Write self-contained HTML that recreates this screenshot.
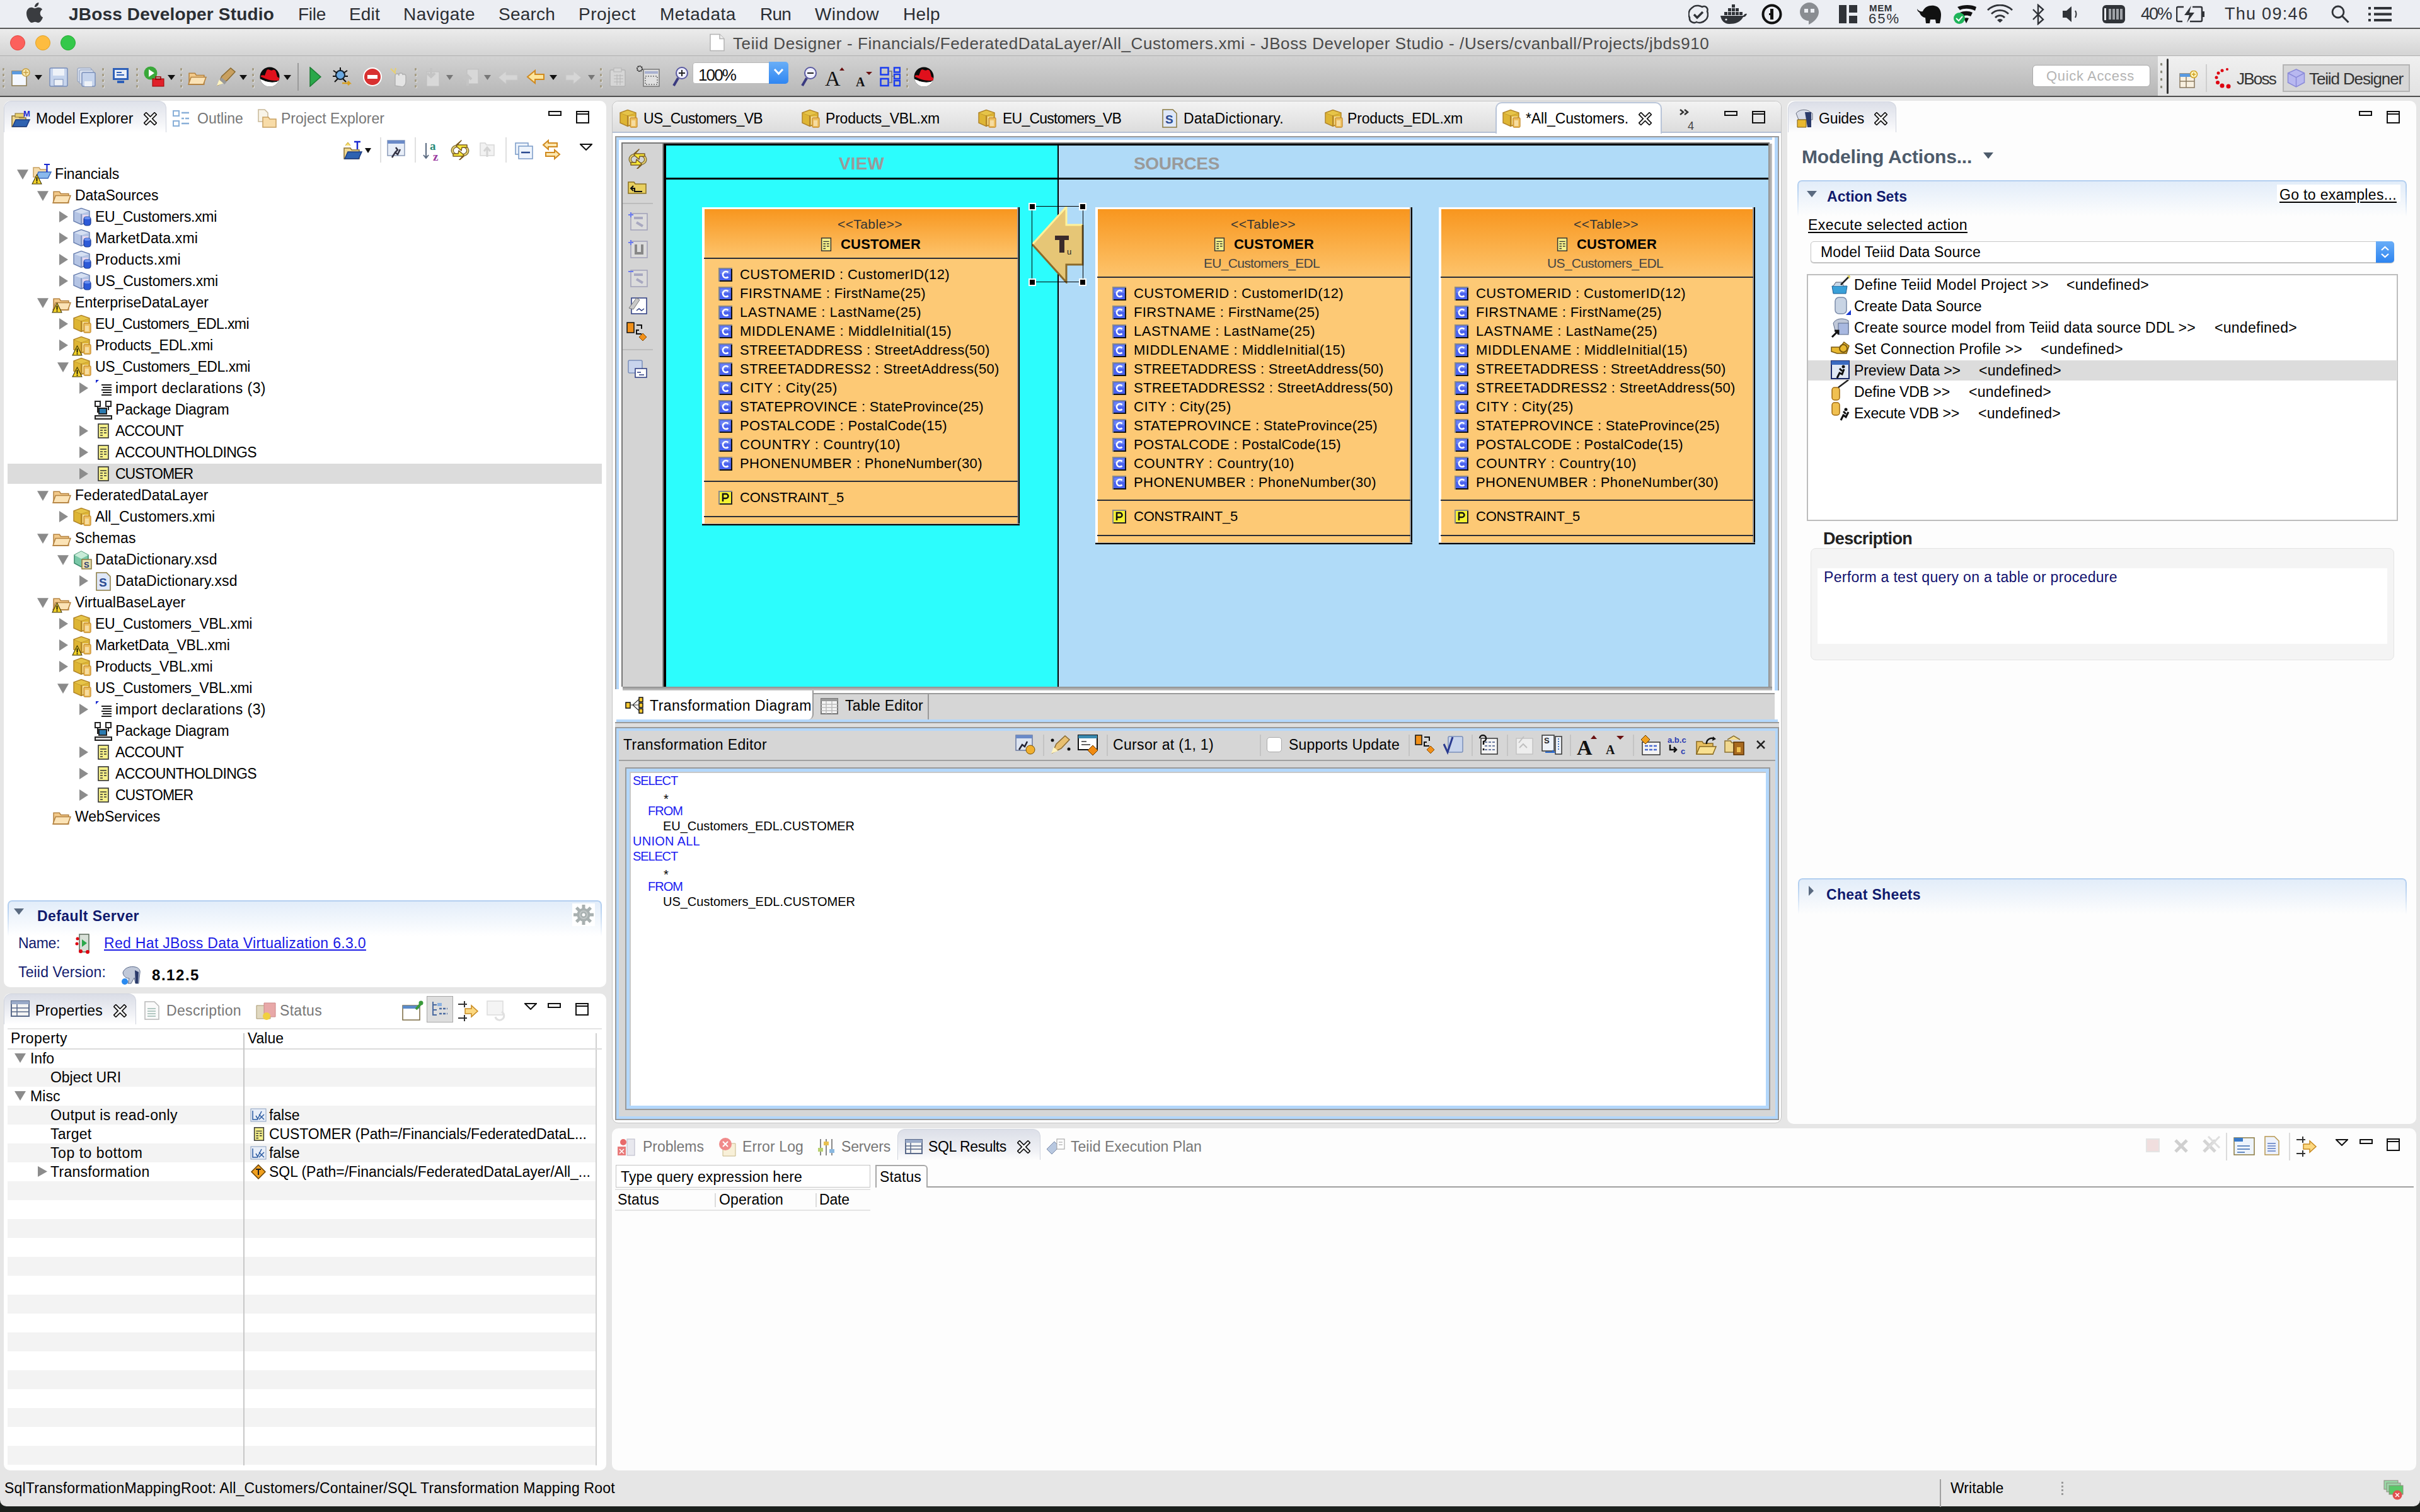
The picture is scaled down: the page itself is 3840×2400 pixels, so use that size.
<!DOCTYPE html><html><head><meta charset="utf-8"><style>
*{margin:0;padding:0;box-sizing:border-box}
html,body{width:3840px;height:2400px;overflow:hidden;background:#1b201d;font-family:"Liberation Sans",sans-serif}
div,svg{position:absolute}
.t{white-space:nowrap}
</style></head><body>
<div style="left:0px;top:0px;width:3840px;height:44px;background:#eceef3"></div>
<div style="left:0px;top:44px;width:3840px;height:2347px;background:#e6e6e6;border-radius:0 0 10px 10px"></div>
<div style="left:0px;top:44px;width:3840px;height:2px;background:#5a5a5a"></div>
<div style="left:0px;top:46px;width:3840px;height:43px;background:linear-gradient(#ececec,#d3d3d3)"></div>
<div style="left:0px;top:88px;width:3840px;height:1px;background:#b0b0b0"></div>
<div style="left:0px;top:89px;width:3840px;height:63px;background:linear-gradient(#d2d2d2,#b7b7b7)"></div>
<div style="left:0px;top:152px;width:3840px;height:2px;background:#4f4f4f"></div>
<div style="left:6px;top:160px;width:956px;height:1407px;background:#fff;border-radius:10px"></div>
<div style="left:6px;top:1577px;width:956px;height:757px;background:#fff;border-radius:10px"></div>
<div style="left:971px;top:160px;width:1856px;height:1623px;background:#fff;border:1px solid #c4c4c4;border-radius:10px"></div>
<div style="left:2836px;top:160px;width:998px;height:1624px;background:#fdfdfd;border-radius:10px"></div>
<div style="left:971px;top:1791px;width:2863px;height:543px;background:#fdfdfd;border-radius:10px"></div>
<svg style="left:42px;top:4px" width="26" height="32" viewBox="0 0 814 1000"><path fill="#3a3c40" d="M788.1 340.9c-5.8 4.5-108.2 62.2-108.2 190.5 0 148.4 130.3 200.9 134.2 202.2-.6 3.2-20.7 71.9-68.7 141.9-42.8 61.6-87.5 123.1-155.5 123.1s-85.5-39.5-164-39.5c-76.5 0-103.7 40.8-165.9 40.8s-105.6-57-155.5-127C46.7 790.7 0 663 0 541.8c0-194.4 126.4-297.5 250.8-297.5 66.1 0 121.2 43.4 162.7 43.4 39.5 0 101.1-46 176.3-46 28.5 0 130.9 2.6 198.3 99.2zm-234-181.5c31.1-36.9 53.1-88.1 53.1-139.3 0-7.1-.6-14.3-1.9-20.1-50.6 1.9-110.8 33.7-147.1 75.8-28.5 32.4-55.1 83.6-55.1 135.5 0 7.8 1.3 15.6 1.9 18.1 3.2.6 8.4 1.3 13.6 1.3 45.4 0 102.5-30.4 135.5-71.3z"/></svg>
<div class="t" style="left:109px;top:8.5px;font-size:28px;line-height:28px;color:#2b2e33;font-weight:bold;letter-spacing:0.175px;">JBoss Developer Studio</div>
<div class="t" style="left:473px;top:8.5px;font-size:28px;line-height:28px;color:#2b2e33;letter-spacing:-0.281px;">File</div>
<div class="t" style="left:554px;top:8.5px;font-size:28px;line-height:28px;color:#2b2e33;letter-spacing:0.188px;">Edit</div>
<div class="t" style="left:640px;top:8.5px;font-size:28px;line-height:28px;color:#2b2e33;letter-spacing:0.434px;">Navigate</div>
<div class="t" style="left:791px;top:8.5px;font-size:28px;line-height:28px;color:#2b2e33;letter-spacing:0.211px;">Search</div>
<div class="t" style="left:918px;top:8.5px;font-size:28px;line-height:28px;color:#2b2e33;letter-spacing:0.549px;">Project</div>
<div class="t" style="left:1047px;top:8.5px;font-size:28px;line-height:28px;color:#2b2e33;letter-spacing:0.527px;">Metadata</div>
<div class="t" style="left:1206px;top:8.5px;font-size:28px;line-height:28px;color:#2b2e33;letter-spacing:-0.792px;">Run</div>
<div class="t" style="left:1293px;top:8.5px;font-size:28px;line-height:28px;color:#2b2e33;letter-spacing:0.401px;">Window</div>
<div class="t" style="left:1433px;top:8.5px;font-size:28px;line-height:28px;color:#2b2e33;letter-spacing:0.352px;">Help</div>
<svg style="left:2679px;top:7px" width="32" height="31" viewBox="0 0 32 31"><path d="M9 3c4-2 10-1 13 1 5-3 10 2 8 7 2 5 1 11-3 14-4 4-10 5-14 3-5 3-12-1-11-7-3-5-1-12 3-15z" fill="none" stroke="#303338" stroke-width="2.5"/><path d="M9 16l5 5 9-9" fill="none" stroke="#303338" stroke-width="3.5"/></svg>
<svg style="left:2729px;top:6px" width="44" height="32" viewBox="0 0 44 32"><rect x="19" y="1" width="5" height="5" fill="#303338"/><rect x="13" y="7" width="5" height="5" fill="#303338"/><rect x="19" y="7" width="5" height="5" fill="#303338"/><rect x="25" y="7" width="5" height="5" fill="#303338"/><rect x="7" y="13" width="5" height="5" fill="#303338"/><rect x="13" y="13" width="5" height="5" fill="#303338"/><rect x="19" y="13" width="5" height="5" fill="#303338"/><rect x="25" y="13" width="5" height="5" fill="#303338"/><rect x="31" y="13" width="5" height="5" fill="#303338"/><path d="M1 19h36c2-3 4-4 6-3-1 3-3 5-6 5-4 8-12 11-22 11C7 32 2 26 1 19z" fill="#303338"/><circle cx="10" cy="25" r="1.6" fill="#eceef3"/></svg>
<svg style="left:2795px;top:6px" width="33" height="33" viewBox="0 0 33 33"><circle cx="16.5" cy="16.5" r="14" fill="none" stroke="#111" stroke-width="4"/><rect x="14" y="8" width="5" height="17" fill="#111"/><rect x="12" y="15" width="3" height="3" fill="#111"/></svg>
<svg style="left:2855px;top:3px" width="32" height="37" viewBox="0 0 32 37"><path d="M16 1C8 1 1 8 1 16c0 7 6 14 14 14v6c9-4 16-12 16-20C31 8 24 1 16 1z" fill="#8a8d92"/><rect x="8" y="11" width="6" height="6" fill="#eceef3"/><rect x="18" y="11" width="6" height="6" fill="#eceef3"/></svg>
<svg style="left:2918px;top:8px" width="29" height="29" viewBox="0 0 29 29"><rect x="0" y="0" width="12" height="29" fill="#303338"/><rect x="16" y="0" width="13" height="12" fill="#303338"/><rect x="16" y="17" width="13" height="12" fill="#303338"/></svg>
<div class="t" style="left:2966px;top:4.8px;font-size:15px;line-height:15px;color:#303338;font-weight:bold;letter-spacing:0.667px;">MEM</div>
<div class="t" style="left:2965px;top:19.4px;font-size:22px;line-height:22px;color:#303338;letter-spacing:1.990px;">65%</div>
<svg style="left:3041px;top:7px" width="40" height="31" viewBox="0 0 40 31"><path d="M1 7c3 4 6 5 9 4 3-7 10-10 18-9 8 1 11 8 11 14 0 5-1 9-2 14h-6l-1-6h-8l-1 6h-6l-1-9c-4 0-8-4-9-8C3 12 1 10 1 7z" fill="#111"/></svg>
<svg style="left:3098px;top:7px" width="40" height="32" viewBox="0 0 40 32"><path d="M8 4c10-4 22-4 30 0l-2 6C28 6 18 6 12 9z M12 13c6-3 14-3 20 0l-3 6c-4-2-9-2-13 0z M18 22c3-1 6-1 8 0l-4 8z" fill="#111"/><circle cx="11" cy="22" r="9" fill="#1eb45a"/><path d="M6 22l4 4 6-7" stroke="#fff" stroke-width="2" fill="none"/></svg>
<svg style="left:3152px;top:7px" width="43" height="30" viewBox="0 0 43 30"><path d="M2 9a28 28 0 0 1 39 0" stroke="#303338" stroke-width="2.8" fill="none"/><path d="M8 15a19 19 0 0 1 27 0" stroke="#303338" stroke-width="2.8" fill="none"/><path d="M14 21a10 10 0 0 1 15 0" stroke="#303338" stroke-width="2.8" fill="none"/><path d="M17 25l4.500 4 4.500-4a6 6 0 0 0-9 0z" fill="#303338"/></svg>
<svg style="left:3224px;top:6px" width="20" height="34" viewBox="0 0 20 34"><path d="M2 9l16 16-8 7V2l8 7L2 25" stroke="#303338" stroke-width="2.4" fill="none"/></svg>
<svg style="left:3273px;top:10px" width="27" height="25" viewBox="0 0 27 25"><path d="M0 7h6l8-7v25l-8-7H0z" fill="#303338"/><path d="M20 7q3 5 0 11" stroke="#303338" stroke-width="2" fill="none"/></svg>
<svg style="left:3336px;top:8px" width="36" height="29" viewBox="0 0 36 29"><rect x="0" y="0" width="36" height="29" rx="6" fill="#303338"/><rect x="3" y="5" width="3" height="19" fill="#eceef3"/><rect x="10" y="6" width="4" height="17" fill="#a0a3a8"/><rect x="16" y="6" width="4" height="17" fill="#a0a3a8"/><rect x="22" y="6" width="4" height="17" fill="#a0a3a8"/><rect x="28" y="6" width="4" height="17" fill="#a0a3a8"/></svg>
<div class="t" style="left:3397px;top:9.0px;font-size:27px;line-height:27px;color:#303338;letter-spacing:-2.010px;">40%</div>
<svg style="left:3453px;top:9px" width="46" height="27" viewBox="0 0 46 27"><path d="M12 2H3a2 2 0 0 0-2 2v19a2 2 0 0 0 2 2h7 M26 2h13a2 2 0 0 1 2 2v19a2 2 0 0 1-2 2H22" stroke="#303338" stroke-width="2.5" fill="none"/><rect x="42" y="9" width="3" height="9" fill="#303338"/><path d="M24 0L13 15h8l-4 12 12-16h-8z" fill="#303338"/></svg>
<div class="t" style="left:3530px;top:9.0px;font-size:27px;line-height:27px;color:#303338;letter-spacing:1.267px;">Thu 09:46</div>
<svg style="left:3699px;top:8px" width="30" height="30" viewBox="0 0 30 30"><circle cx="11" cy="11" r="9" stroke="#303338" stroke-width="2.8" fill="none"/><path d="M17.500 17.500l10 10" stroke="#303338" stroke-width="3" /></svg>
<svg style="left:3758px;top:11px" width="37" height="23" viewBox="0 0 37 23"><rect x="0" y="0" width="4" height="4" fill="#303338"/><rect x="0" y="9.500" width="4" height="4" fill="#303338"/><rect x="0" y="19" width="4" height="4" fill="#303338"/><rect x="9" y="0" width="28" height="4" fill="#303338"/><rect x="9" y="9.500" width="28" height="4" fill="#303338"/><rect x="9" y="19" width="28" height="4" fill="#303338"/></svg>
<div style="left:16px;top:56px;width:24px;height:24px;background:#fc605c;border:1px solid #e2463f;border-radius:50%"></div>
<div style="left:56px;top:56px;width:24px;height:24px;background:#fdbc40;border:1px solid #e1a127;border-radius:50%"></div>
<div style="left:96px;top:56px;width:24px;height:24px;background:#34c84a;border:1px solid #27aa35;border-radius:50%"></div>
<svg style="left:1126px;top:53px" width="24" height="29" viewBox="0 0 24 28"><path d="M1 1h15l7 7v19H1z" fill="#fff" stroke="#b4b4b4" stroke-width="1.5"/><path d="M16 1v7h7" fill="#eee" stroke="#b4b4b4" stroke-width="1.5"/></svg>
<div class="t" style="left:1163px;top:55.5px;font-size:26px;line-height:26px;color:#4a4a4a;letter-spacing:0.596px;">Teiid Designer - Financials/FederatedDataLayer/All_Customers.xmi - JBoss Developer Studio - /Users/cvanball/Projects/jbds910</div>
<div style="left:4px;top:108px;width:3px;height:4px;background:#a49c84;border-radius:1px;box-shadow:1px 1px 0 #e0e0e0"></div>
<div style="left:4px;top:117px;width:3px;height:4px;background:#a49c84;border-radius:1px;box-shadow:1px 1px 0 #e0e0e0"></div>
<div style="left:4px;top:126px;width:3px;height:4px;background:#a49c84;border-radius:1px;box-shadow:1px 1px 0 #e0e0e0"></div>
<div style="left:4px;top:135px;width:3px;height:4px;background:#a49c84;border-radius:1px;box-shadow:1px 1px 0 #e0e0e0"></div>
<div style="left:162px;top:108px;width:3px;height:4px;background:#a49c84;border-radius:1px;box-shadow:1px 1px 0 #e0e0e0"></div>
<div style="left:162px;top:117px;width:3px;height:4px;background:#a49c84;border-radius:1px;box-shadow:1px 1px 0 #e0e0e0"></div>
<div style="left:162px;top:126px;width:3px;height:4px;background:#a49c84;border-radius:1px;box-shadow:1px 1px 0 #e0e0e0"></div>
<div style="left:162px;top:135px;width:3px;height:4px;background:#a49c84;border-radius:1px;box-shadow:1px 1px 0 #e0e0e0"></div>
<div style="left:216px;top:108px;width:3px;height:4px;background:#a49c84;border-radius:1px;box-shadow:1px 1px 0 #e0e0e0"></div>
<div style="left:216px;top:117px;width:3px;height:4px;background:#a49c84;border-radius:1px;box-shadow:1px 1px 0 #e0e0e0"></div>
<div style="left:216px;top:126px;width:3px;height:4px;background:#a49c84;border-radius:1px;box-shadow:1px 1px 0 #e0e0e0"></div>
<div style="left:216px;top:135px;width:3px;height:4px;background:#a49c84;border-radius:1px;box-shadow:1px 1px 0 #e0e0e0"></div>
<div style="left:286px;top:108px;width:3px;height:4px;background:#a49c84;border-radius:1px;box-shadow:1px 1px 0 #e0e0e0"></div>
<div style="left:286px;top:117px;width:3px;height:4px;background:#a49c84;border-radius:1px;box-shadow:1px 1px 0 #e0e0e0"></div>
<div style="left:286px;top:126px;width:3px;height:4px;background:#a49c84;border-radius:1px;box-shadow:1px 1px 0 #e0e0e0"></div>
<div style="left:286px;top:135px;width:3px;height:4px;background:#a49c84;border-radius:1px;box-shadow:1px 1px 0 #e0e0e0"></div>
<div style="left:400px;top:108px;width:3px;height:4px;background:#a49c84;border-radius:1px;box-shadow:1px 1px 0 #e0e0e0"></div>
<div style="left:400px;top:117px;width:3px;height:4px;background:#a49c84;border-radius:1px;box-shadow:1px 1px 0 #e0e0e0"></div>
<div style="left:400px;top:126px;width:3px;height:4px;background:#a49c84;border-radius:1px;box-shadow:1px 1px 0 #e0e0e0"></div>
<div style="left:400px;top:135px;width:3px;height:4px;background:#a49c84;border-radius:1px;box-shadow:1px 1px 0 #e0e0e0"></div>
<div style="left:658px;top:108px;width:3px;height:4px;background:#a49c84;border-radius:1px;box-shadow:1px 1px 0 #e0e0e0"></div>
<div style="left:658px;top:117px;width:3px;height:4px;background:#a49c84;border-radius:1px;box-shadow:1px 1px 0 #e0e0e0"></div>
<div style="left:658px;top:126px;width:3px;height:4px;background:#a49c84;border-radius:1px;box-shadow:1px 1px 0 #e0e0e0"></div>
<div style="left:658px;top:135px;width:3px;height:4px;background:#a49c84;border-radius:1px;box-shadow:1px 1px 0 #e0e0e0"></div>
<div style="left:952px;top:108px;width:3px;height:4px;background:#a49c84;border-radius:1px;box-shadow:1px 1px 0 #e0e0e0"></div>
<div style="left:952px;top:117px;width:3px;height:4px;background:#a49c84;border-radius:1px;box-shadow:1px 1px 0 #e0e0e0"></div>
<div style="left:952px;top:126px;width:3px;height:4px;background:#a49c84;border-radius:1px;box-shadow:1px 1px 0 #e0e0e0"></div>
<div style="left:952px;top:135px;width:3px;height:4px;background:#a49c84;border-radius:1px;box-shadow:1px 1px 0 #e0e0e0"></div>
<div style="left:1438px;top:108px;width:3px;height:4px;background:#a49c84;border-radius:1px;box-shadow:1px 1px 0 #e0e0e0"></div>
<div style="left:1438px;top:117px;width:3px;height:4px;background:#a49c84;border-radius:1px;box-shadow:1px 1px 0 #e0e0e0"></div>
<div style="left:1438px;top:126px;width:3px;height:4px;background:#a49c84;border-radius:1px;box-shadow:1px 1px 0 #e0e0e0"></div>
<div style="left:1438px;top:135px;width:3px;height:4px;background:#a49c84;border-radius:1px;box-shadow:1px 1px 0 #e0e0e0"></div>
<div style="left:3428px;top:108px;width:3px;height:4px;background:#a49c84;border-radius:1px;box-shadow:1px 1px 0 #e0e0e0"></div>
<div style="left:3428px;top:117px;width:3px;height:4px;background:#a49c84;border-radius:1px;box-shadow:1px 1px 0 #e0e0e0"></div>
<div style="left:3428px;top:126px;width:3px;height:4px;background:#a49c84;border-radius:1px;box-shadow:1px 1px 0 #e0e0e0"></div>
<div style="left:3428px;top:135px;width:3px;height:4px;background:#a49c84;border-radius:1px;box-shadow:1px 1px 0 #e0e0e0"></div>
<div style="left:472px;top:100px;width:2px;height:44px;background:#9a9a9a"></div>
<svg style="left:18px;top:107px" width="30" height="31" viewBox="0 0 30 31"><rect x="1" y="6" width="23" height="23" fill="#f4f8ff" stroke="#8a7a50" stroke-width="1.5"/><rect x="1" y="6" width="23" height="5" fill="#5a9ae0"/><circle cx="23" cy="8" r="6" fill="#f8e8b0" stroke="#c8a040" stroke-width="1.5"/><path d="M23 4v8M19 8h8" stroke="#c8a040" stroke-width="1.5"/></svg>
<svg style="left:55px;top:119px" width="12" height="8" viewBox="0 0 12 8"><path d="M0 0h12l-6.0 8z" fill="#111"/></svg>
<svg style="left:78px;top:107px" width="30" height="31" viewBox="0 0 30 31"><rect x="1" y="1" width="28" height="29" rx="2" fill="#c6d4ec" stroke="#7a8fba" stroke-width="1.5"/><rect x="6" y="2" width="18" height="11" fill="#eef2f8"/><rect x="8" y="19" width="14" height="10" fill="#eef2f8" stroke="#7a8fba"/></svg>
<svg style="left:122px;top:107px" width="30" height="31" viewBox="0 0 30 31"><rect x="1" y="1" width="22" height="22" rx="2" fill="#d8e0ee" stroke="#8a9aba"/><rect x="4" y="4" width="22" height="22" rx="2" fill="#d8e0ee" stroke="#8a9aba"/><rect x="8" y="8" width="21" height="22" rx="2" fill="#c6d4ec" stroke="#7a8fba" stroke-width="1.5"/><rect x="12" y="22" width="12" height="8" fill="#eef2f8"/></svg>
<svg style="left:178px;top:107px" width="27" height="26" viewBox="0 0 27 26"><rect x="1" y="1" width="25" height="19" fill="#2d5fb8"/><rect x="4" y="4" width="19" height="13" fill="#e8eef8"/><path d="M7 8h8M7 12h12" stroke="#2d5fb8" stroke-width="2"/><rect x="8" y="21" width="11" height="4" fill="#2d5fb8"/></svg>
<svg style="left:228px;top:105px" width="33" height="33" viewBox="0 0 33 33"><circle cx="11" cy="11" r="10.500" fill="#3aa83a"/><path d="M8 5v12l9-6z" fill="#fff"/><rect x="14" y="20" width="18" height="12" fill="#e0202a" stroke="#900" stroke-width="1"/><rect x="19" y="17" width="8" height="4" fill="none" stroke="#900" stroke-width="1.5"/></svg>
<svg style="left:266px;top:119px" width="12" height="8" viewBox="0 0 12 8"><path d="M0 0h12l-6.0 8z" fill="#111"/></svg>
<svg style="left:298px;top:107px" width="31" height="31" viewBox="0 0 30 30"><path d="M2 9h9l2 3h12v14H2z" fill="#f2c98a" stroke="#b58340" stroke-width="1.5"/><path d="M5 15h23l-4 11H1z" fill="#fbe3b6" stroke="#b58340" stroke-width="1.5"/></svg>
<svg style="left:342px;top:107px" width="32" height="30" viewBox="0 0 32 30"><path d="M4 28l6-14 14-13 7 6-13 14z" fill="#c8a060" stroke="#8a6a30" stroke-width="1.5"/><path d="M2 29l4-10 7 6z" fill="#fff4c0"/><path d="M8 18l8 7" stroke="#999" stroke-width="5"/></svg>
<svg style="left:380px;top:119px" width="12" height="8" viewBox="0 0 12 8"><path d="M0 0h12l-6.0 8z" fill="#111"/></svg>
<svg style="left:412px;top:106px" width="32" height="32" viewBox="0 0 32 32"><defs><clipPath id="rhc"><circle cx="16" cy="16" r="15.500"/></clipPath></defs><g clip-path="url(#rhc)"><rect width="32" height="32" fill="#0a0a0a"/><path d="M0 19c6 3 13 5 20 5 5 0 9-1 12-3v11H0z" fill="#fff"/><path d="M2 14c2-1 4-1 6 0l3-8c1-2 3-2 5-1 2 1 4 1 5 0 2-1 4 0 5 3l2 8c2 1 4 2 4 4-1 2-4 2-8 2-7 0-15-3-22-6z" fill="#e0101c"/><path d="M8 22c6 2 13 3 20 1" stroke="#111" stroke-width="1.2" fill="none"/></g></svg>
<svg style="left:450px;top:119px" width="12" height="8" viewBox="0 0 12 8"><path d="M0 0h12l-6.0 8z" fill="#111"/></svg>
<svg style="left:490px;top:106px" width="20" height="32" viewBox="0 0 20 32"><path d="M2 1v30l17-15z" fill="#2aa84a" stroke="#1a7a30" stroke-width="1.5"/></svg>
<svg style="left:527px;top:106px" width="33" height="32" viewBox="0 0 33 32"><circle cx="13" cy="13" r="7" fill="#6aa8e0" stroke="#123" stroke-width="2"/><path d="M2 6l6 4M24 6l-6 4M1 15h5M20 15h5M4 24l5-5M22 24l-5-5M13 1v5" stroke="#111" stroke-width="2"/><path d="M16 26h12l-3-3M28 26l-3 3" stroke="#d8a020" stroke-width="2.500" fill="none"/></svg>
<svg style="left:575px;top:106px" width="32" height="32" viewBox="0 0 32 32"><circle cx="16" cy="16" r="14" fill="#d83030" stroke="#fff" stroke-width="2"/><rect x="8" y="13" width="16" height="6" fill="#fff"/></svg>
<svg style="left:617px;top:106px" width="30" height="32" viewBox="0 0 30 32"><path d="M10 30V14q0-3 3-3t3 3v-2q0-2 3-2t3 2v1q1-2 3-1t2 2v10q0 5-5 8z" fill="#e4e4e4" stroke="#b0b0b0" stroke-width="1.5"/><path d="M3 3l8 8M11 2l-2 8" stroke="#e8d070" stroke-width="2"/></svg>
<svg style="left:672px;top:106px" width="27" height="32" viewBox="0 0 27 32"><rect x="5" y="8" width="20" height="23" fill="#d8d8d8" stroke="#bdbdbd"/><path d="M12 2v14M6 10l6 6 6-6" stroke="#c4c4c4" stroke-width="4" fill="none"/></svg>
<svg style="left:708px;top:119px" width="11" height="8" viewBox="0 0 11 8"><path d="M0 0h11l-5.5 8z" fill="#777"/></svg>
<svg style="left:733px;top:106px" width="27" height="32" viewBox="0 0 27 32"><rect x="8" y="4" width="18" height="23" fill="#d8d8d8" stroke="#bdbdbd"/><path d="M9 30V14M3 20l6-6 6 6" stroke="#c4c4c4" stroke-width="4" fill="none"/></svg>
<svg style="left:768px;top:119px" width="11" height="8" viewBox="0 0 11 8"><path d="M0 0h11l-5.5 8z" fill="#777"/></svg>
<svg style="left:790px;top:112px" width="33" height="22" viewBox="0 0 33 22"><path d="M1 11l12-10v6h18v8H13v6z" fill="#d6d6d6" stroke="#c8c8c8"/></svg>
<svg style="left:835px;top:110px" width="30" height="24" viewBox="0 0 30 24"><path d="M2 12l12-10v6h14v8H14v6z" fill="#fde59a" stroke="#d08a20" stroke-width="2"/></svg>
<svg style="left:872px;top:119px" width="12" height="8" viewBox="0 0 12 8"><path d="M0 0h12l-6.0 8z" fill="#111"/></svg>
<svg style="left:897px;top:112px" width="26" height="22" viewBox="0 0 26 22"><path d="M25 11L13 1v6H1v8h12v6z" fill="#d6d6d6" stroke="#c8c8c8"/></svg>
<svg style="left:933px;top:119px" width="11" height="8" viewBox="0 0 11 8"><path d="M0 0h11l-5.5 8z" fill="#777"/></svg>
<svg style="left:966px;top:106px" width="28" height="32" viewBox="0 0 28 32"><rect x="2" y="5" width="24" height="26" rx="2" fill="#d6d6d6" stroke="#b4b4b4" stroke-width="1.5"/><rect x="8" y="2" width="12" height="6" fill="#d6d6d6" stroke="#b4b4b4"/><path d="M8 14h15M8 19h15M8 24h15M13 12v17M18 12v17" stroke="#b4b4b4"/></svg>
<svg style="left:1010px;top:104px" width="37" height="34" viewBox="0 0 37 34"><circle cx="5" cy="5" r="4" fill="none" stroke="#222" stroke-width="2" stroke-dasharray="2 1"/><rect x="11" y="6" width="25" height="27" fill="#e0e0e0" stroke="#777" stroke-width="1.5"/><rect x="13" y="9" width="21" height="4" fill="#a8b0d0"/><rect x="14" y="17" width="19" height="13" fill="none" stroke="#333" stroke-dasharray="2 2"/></svg>
<svg style="left:1066px;top:105px" width="26" height="33" viewBox="0 0 26 33"><circle cx="16" cy="11" r="9" fill="#f0f0ff" stroke="#5a5aa0" stroke-width="2"/><path d="M16 6v10M11 11h10" stroke="#222" stroke-width="2"/><path d="M3 31l7-12" stroke="#3a3a80" stroke-width="4"/></svg>
<div style="left:1099px;top:99px;width:152px;height:34px;background:#fff;border:1px solid #b8b8b8;border-radius:4px"></div>
<div style="left:1220px;top:98px;width:31px;height:35px;background:linear-gradient(#69aef7,#2f86f2);border-radius:0 5px 5px 0"></div>
<svg style="left:1227px;top:108px" width="17" height="12" viewBox="0 0 17 12"><path d="M2 2l6.500 7L15 2" stroke="#fff" stroke-width="3" fill="none"/></svg>
<div class="t" style="left:1108px;top:105.5px;font-size:26px;line-height:26px;color:#111;letter-spacing:-1.871px;">100%</div>
<svg style="left:1270px;top:105px" width="26" height="33" viewBox="0 0 26 33"><circle cx="16" cy="11" r="9" fill="#f0f0ff" stroke="#5a5aa0" stroke-width="2"/><path d="M11 11h10" stroke="#222" stroke-width="2"/><path d="M3 31l7-12" stroke="#3a3a80" stroke-width="4"/></svg>
<svg style="left:1308px;top:106px" width="33" height="32" viewBox="0 0 33 32"><text x="1" y="30" font-family="Liberation Serif" font-size="34" fill="#111">A</text><path d="M24 6l4-5 4 5z" fill="#6a1010"/></svg>
<svg style="left:1358px;top:112px" width="27" height="26" viewBox="0 0 27 26"><text x="0" y="25" font-family="Liberation Serif" font-weight="bold" font-size="20" fill="#111">A</text><path d="M16 2h10l-5 5z" fill="#6a1010"/></svg>
<svg style="left:1396px;top:106px" width="33" height="32" viewBox="0 0 33 32"><rect x="1.500" y="1.500" width="12" height="11" fill="none" stroke="#1a3cf0" stroke-width="2.500"/><rect x="1.500" y="19" width="12" height="11" fill="none" stroke="#1a3cf0" stroke-width="2.500"/><rect x="23" y="1.500" width="9" height="7" fill="none" stroke="#1a3cf0" stroke-width="2.500"/><rect x="23" y="12" width="9" height="7" fill="none" stroke="#1a3cf0" stroke-width="2.500"/><rect x="23" y="22" width="9" height="8" fill="none" stroke="#1a3cf0" stroke-width="2.500"/><path d="M14 7h5v18h-5M19 15h4" stroke="#777" stroke-width="1.500" fill="none"/></svg>
<svg style="left:1450px;top:106px" width="32" height="32" viewBox="0 0 32 32"><defs><clipPath id="rhc"><circle cx="16" cy="16" r="15.500"/></clipPath></defs><g clip-path="url(#rhc)"><rect width="32" height="32" fill="#0a0a0a"/><path d="M0 19c6 3 13 5 20 5 5 0 9-1 12-3v11H0z" fill="#fff"/><path d="M2 14c2-1 4-1 6 0l3-8c1-2 3-2 5-1 2 1 4 1 5 0 2-1 4 0 5 3l2 8c2 1 4 2 4 4-1 2-4 2-8 2-7 0-15-3-22-6z" fill="#e0101c"/><path d="M8 22c6 2 13 3 20 1" stroke="#111" stroke-width="1.2" fill="none"/></g></svg>
<div style="left:3225px;top:103px;width:187px;height:35px;background:#fff;border:1px solid #a8a8a8;border-radius:6px"></div>
<div class="t" style="left:3247px;top:110.4px;font-size:22px;line-height:22px;color:#b4b4b4;letter-spacing:0.664px;">Quick Access</div>
<div style="left:3424px;top:89px;width:416px;height:63px;background:linear-gradient(#f0f0f0,#e2e2e2)"></div>
<div style="left:3438px;top:93px;width:3px;height:56px;background:#333;border-radius:2px"></div>
<div style="left:3428px;top:100px;width:3px;height:4px;background:#8a8a7a;border-radius:1px;box-shadow:1px 1px 0 #e0e0e0"></div>
<div style="left:3428px;top:112px;width:3px;height:4px;background:#8a8a7a;border-radius:1px;box-shadow:1px 1px 0 #e0e0e0"></div>
<div style="left:3428px;top:124px;width:3px;height:4px;background:#8a8a7a;border-radius:1px;box-shadow:1px 1px 0 #e0e0e0"></div>
<div style="left:3428px;top:136px;width:3px;height:4px;background:#8a8a7a;border-radius:1px;box-shadow:1px 1px 0 #e0e0e0"></div>
<svg style="left:3458px;top:112px" width="30" height="28" viewBox="0 0 30 28"><rect x="1" y="5" width="23" height="22" fill="#f8f0e0" stroke="#8a7a60" stroke-width="1.5"/><rect x="1" y="5" width="23" height="5" fill="#5a9ae0"/><path d="M1 17h23M11 10v17" stroke="#8a7a60" stroke-width="1.5"/><circle cx="23" cy="6" r="5.500" fill="#fff6c0" stroke="#d0a020" stroke-width="1.5"/><path d="M23 3v6M20 6h6" stroke="#d0a020" stroke-width="1.500"/></svg>
<div style="left:3500px;top:102px;width:2px;height:44px;background:#cfcfcf"></div>
<svg style="left:3514px;top:107px" width="27" height="34" viewBox="0 0 27 34"><circle cx="12" cy="5" r="2.5" fill="#d01"/><circle cx="20" cy="3" r="2" fill="#d01"/><circle cx="6" cy="9" r="2.5" fill="#d01"/><circle cx="3" cy="16" r="2.5" fill="#d01"/><circle cx="5" cy="24" r="3" fill="#d01"/><circle cx="12" cy="29" r="3.500" fill="#d01"/><circle cx="22" cy="30" r="3.500" fill="#d01"/></svg>
<div class="t" style="left:3549px;top:111.5px;font-size:26px;line-height:26px;color:#333;letter-spacing:-1.759px;">JBoss</div>
<div style="left:3622px;top:102px;width:202px;height:44px;background:#d7d7d7;border:2px solid #b4b4b4"></div>
<svg style="left:3629px;top:109px" width="29" height="30" viewBox="0 0 29 30"><path d="M14.500 1l13 6v15l-13 7-13-7V7z" fill="#b8b8f0" stroke="#8a8ad8" stroke-width="1.5"/><path d="M1.500 7l13 7 13-7M14.500 14v15" stroke="#8a8ad8" stroke-width="1.500" fill="none"/></svg>
<div class="t" style="left:3664px;top:111.5px;font-size:26px;line-height:26px;color:#333;letter-spacing:-1.123px;">Teiid Designer</div>
<div style="left:6px;top:160px;width:258px;height:50px;background:linear-gradient(#dfe2ea,#f4f5f8 70%,#fff);border-radius:12px 12px 0 0;border:1px solid #d0d4de;border-bottom:none"></div>
<svg style="left:17px;top:172px" width="32" height="32" viewBox="0 0 32 32"><path d="M2 12h10l2 3h10v14H2z" fill="#f0d890" stroke="#8a7030" stroke-width="1.5"/><path d="M3 29l5-11h22l-5 11z" fill="#2e62b0" stroke="#1a3a80" stroke-width="1.5"/><rect x="7" y="8" width="14" height="6" fill="#e8d070" stroke="#8a7030"/><text x="20" y="13" font-size="13" font-weight="bold" font-family="Liberation Sans" fill="#1a2ad0">M</text></svg>
<div class="t" style="left:57px;top:176.9px;font-size:23px;line-height:23px;color:#000;letter-spacing:-0.017px;">Model Explorer</div>
<svg style="left:228px;top:178px" width="21" height="21" viewBox="0 0 22 22"><path d="M4 4l14 14M18 4L4 18" stroke="#111" stroke-width="6.500" stroke-linecap="square"/><path d="M4 4l14 14M18 4L4 18" stroke="#fff" stroke-width="3" stroke-linecap="square"/></svg>
<svg style="left:274px;top:174px" width="28" height="28" viewBox="0 0 28 28"><rect x="1" y="2" width="9" height="8" fill="none" stroke="#8ab0d8" stroke-width="2"/><rect x="1" y="18" width="9" height="8" fill="none" stroke="#8ab0d8" stroke-width="2"/><path d="M14 5h12M14 14h4M20 14h6M14 22h12" stroke="#8ab0d8" stroke-width="2.500"/></svg>
<div class="t" style="left:313px;top:176.9px;font-size:23px;line-height:23px;color:#777;letter-spacing:0.004px;">Outline</div>
<svg style="left:408px;top:172px" width="32" height="32" viewBox="0 0 32 32"><path d="M2 2h10l5 5v14H2z" fill="#f8f4e8" stroke="#c8b898" stroke-width="1.5"/><path d="M9 14h9l2 3h10v13H9z" fill="#f8dca8" stroke="#c8a060" stroke-width="1.5"/></svg>
<div class="t" style="left:446px;top:176.9px;font-size:23px;line-height:23px;color:#777;letter-spacing:0.015px;">Project Explorer</div>
<div style="left:870px;top:176px;width:21px;height:8px;border:2px solid #111"></div>
<div style="left:914px;top:176px;width:21px;height:20px;border:2px solid #111"></div>
<div style="left:916px;top:180px;width:17px;height:1.5px;background:#111"></div>
<svg style="left:544px;top:222px" width="32" height="32" viewBox="0 0 32 32"><path d="M2 13h10l2 3h12v14H2z" fill="#f0d890" stroke="#8a7030" stroke-width="1.5"/><path d="M3 30l5-11h22l-5 11z" fill="#2e62b0" stroke="#1a3a80" stroke-width="1.5"/><path d="M18 3h10M23 3v12" stroke="#1a2ad0" stroke-width="2.500"/><path d="M4 9l4-5 4 5" fill="#f8e070" stroke="#c8a020"/></svg>
<svg style="left:579px;top:235px" width="10" height="8" viewBox="0 0 10 8"><path d="M0 0h10l-5.0 8z" fill="#111"/></svg>
<div style="left:603px;top:218px;width:2px;height:40px;background:#e0e0e0"></div>
<svg style="left:614px;top:222px" width="30" height="32" viewBox="0 0 30 32"><rect x="1" y="1" width="27" height="24" fill="#e8eef8" stroke="#8a9ab8" stroke-width="1.5"/><rect x="1" y="1" width="27" height="5" fill="#6a8ac8"/><path d="M8 28l5-8 4 3 4-8M14 12l3 4-4 4" stroke="#334" stroke-width="2.500" fill="none"/></svg>
<div style="left:658px;top:218px;width:2px;height:40px;background:#e0e0e0"></div>
<svg style="left:671px;top:222px" width="32" height="34" viewBox="0 0 32 34"><path d="M5 5v24M1 24l4 5 4-5" stroke="#5a6a80" stroke-width="2" fill="none"/><text x="11" y="16" font-size="19" font-weight="bold" font-family="Liberation Serif" fill="#2a8a7a">a</text><text x="16" y="33" font-size="19" font-weight="bold" font-family="Liberation Serif" fill="#9a3aa0">z</text></svg>
<svg style="left:714px;top:222px" width="32" height="32" viewBox="0 0 32 32"><path d="M13 9.500C6 10 3 14 4 18.500 5 22 9 24 12 24" stroke="#7a6a30" stroke-width="4.500" fill="none"/><path d="M13 9.500C6 10 3 14 4 18.500 5 22 9 24 12 24" stroke="#e8d070" stroke-width="2" fill="none"/><path d="M19 24.500C26 24 29 20 28 15.500 27 12 23 10 20 10" stroke="#7a6a30" stroke-width="4.500" fill="none"/><path d="M19 24.500C26 24 29 20 28 15.500 27 12 23 10 20 10" stroke="#e8d070" stroke-width="2" fill="none"/><path d="M10 8h17v4H19l-1 5-8-7 8-9z" fill="#f8e838" stroke="#7a5a20" stroke-width="1.500" stroke-linejoin="round"/><path d="M22 26H5v-4h8l1-5 8 7-8 9z" fill="#f8e838" stroke="#7a5a20" stroke-width="1.500" stroke-linejoin="round"/></svg>
<svg style="left:760px;top:223px" width="26" height="28" viewBox="0 0 26 28"><path d="M2 4h8l2 3h12v17H2z" fill="#f2f2f2" stroke="#d8d8d8" stroke-width="1.500"/><path d="M13 26V13M8 17l5-6 5 6" stroke="#d4d4d4" stroke-width="3" fill="none"/></svg>
<div style="left:802px;top:218px;width:2px;height:40px;background:#e0e0e0"></div>
<svg style="left:817px;top:226px" width="30" height="28" viewBox="0 0 30 28"><rect x="1" y="1" width="20" height="18" fill="#eef4fc" stroke="#7a9ac8" stroke-width="1.5"/><rect x="6" y="6" width="22" height="20" fill="#eef4fc" stroke="#7a9ac8" stroke-width="1.5"/><path d="M10 16h14" stroke="#2a4a90" stroke-width="2.500"/></svg>
<svg style="left:859px;top:221px" width="32" height="34" viewBox="0 0 32 34"><path d="M3 9l8-7v4h14v6H11v4zM29 24l-8-7v4H7v6h14v4z" fill="#fde8b0" stroke="#d08a20" stroke-width="2"/></svg>
<svg style="left:920px;top:228px" width="20" height="11" viewBox="0 0 20 11"><path d="M1 1h18L10 10z" fill="none" stroke="#111" stroke-width="2"/></svg>
<div style="left:12px;top:736px;width:943px;height:32px;background:#dcdcdc"></div>
<svg style="left:27px;top:267px" width="18" height="18" viewBox="0 0 16 16"><path d="M0 2h16L8 16z" fill="#8a8a8a"/></svg>
<svg style="left:51px;top:260px" width="32" height="32" viewBox="0 0 32 32"><path d="M2 6h9l2 3h10v12H2z" fill="#f6dcaa" stroke="#c8a060" stroke-width="1.5"/><path d="M6 23l4-10h20l-5 10z" fill="#8ab8ec" stroke="#3a6ac0" stroke-width="1.5"/><path d="M19 1h9M23.5 1v12" stroke="#1a2ad0" stroke-width="2.200"/></svg>
<svg style="left:50px;top:276px" width="17" height="17" viewBox="0 0 16 16"><path d="M8 1l7 14H1z" fill="#f2d22a" stroke="#3a3000" stroke-width="1"/><rect x="7.2" y="5" width="1.6" height="6" fill="#000"/><rect x="7.2" y="12" width="1.6" height="1.6" fill="#000"/></svg>
<div class="t" style="left:87px;top:264.9px;font-size:23px;line-height:23px;color:#000;letter-spacing:-0.156px;">Financials</div>
<svg style="left:59px;top:301px" width="18" height="18" viewBox="0 0 16 16"><path d="M0 2h16L8 16z" fill="#8a8a8a"/></svg>
<svg style="left:83px;top:295px" width="31" height="31" viewBox="0 0 30 30"><path d="M2 9h9l2 3h12v14H2z" fill="#f2c98a" stroke="#b58340" stroke-width="1.5"/><path d="M5 15h23l-4 11H1z" fill="#fbe3b6" stroke="#b58340" stroke-width="1.5"/></svg>
<div class="t" style="left:119px;top:298.9px;font-size:23px;line-height:23px;color:#000;letter-spacing:-0.044px;">DataSources</div>
<svg style="left:93px;top:335px" width="16" height="18" viewBox="0 0 16 18"><path d="M1 0v18L15 9z" fill="#8c8c8c"/></svg>
<svg style="left:115px;top:329px" width="30" height="30" viewBox="0 0 30 30"><path d="M2 6L14 1.500l13 4.500v16l-13 5.500-12-5.500z" fill="#b4c4e4" stroke="#6a80b0" stroke-width="1.400"/><path d="M3 6.500l11 4 12-4-12-4z" fill="#d6e0f2"/><path d="M14 10.500v17" stroke="#7a8ab8" stroke-width="1.600"/><path d="M16 12h9v3h-7v10h-2z" fill="#e8d8f0"/><rect x="18" y="15" width="11" height="14" rx="4" fill="#2d5ad8" stroke="#1a3a90" stroke-width="1.200"/><ellipse cx="23.500" cy="17" rx="5" ry="2" fill="#6a90f0"/></svg>
<div class="t" style="left:151px;top:332.9px;font-size:23px;line-height:23px;color:#000;letter-spacing:-0.319px;">EU_Customers.xmi</div>
<svg style="left:93px;top:369px" width="16" height="18" viewBox="0 0 16 18"><path d="M1 0v18L15 9z" fill="#8c8c8c"/></svg>
<svg style="left:115px;top:363px" width="30" height="30" viewBox="0 0 30 30"><path d="M2 6L14 1.500l13 4.500v16l-13 5.500-12-5.500z" fill="#b4c4e4" stroke="#6a80b0" stroke-width="1.400"/><path d="M3 6.500l11 4 12-4-12-4z" fill="#d6e0f2"/><path d="M14 10.500v17" stroke="#7a8ab8" stroke-width="1.600"/><path d="M16 12h9v3h-7v10h-2z" fill="#e8d8f0"/><rect x="18" y="15" width="11" height="14" rx="4" fill="#2d5ad8" stroke="#1a3a90" stroke-width="1.200"/><ellipse cx="23.500" cy="17" rx="5" ry="2" fill="#6a90f0"/></svg>
<div class="t" style="left:151px;top:366.9px;font-size:23px;line-height:23px;color:#000;letter-spacing:0.140px;">MarketData.xmi</div>
<svg style="left:93px;top:403px" width="16" height="18" viewBox="0 0 16 18"><path d="M1 0v18L15 9z" fill="#8c8c8c"/></svg>
<svg style="left:115px;top:397px" width="30" height="30" viewBox="0 0 30 30"><path d="M2 6L14 1.500l13 4.500v16l-13 5.500-12-5.500z" fill="#b4c4e4" stroke="#6a80b0" stroke-width="1.400"/><path d="M3 6.500l11 4 12-4-12-4z" fill="#d6e0f2"/><path d="M14 10.500v17" stroke="#7a8ab8" stroke-width="1.600"/><path d="M16 12h9v3h-7v10h-2z" fill="#e8d8f0"/><rect x="18" y="15" width="11" height="14" rx="4" fill="#2d5ad8" stroke="#1a3a90" stroke-width="1.200"/><ellipse cx="23.500" cy="17" rx="5" ry="2" fill="#6a90f0"/></svg>
<div class="t" style="left:151px;top:400.9px;font-size:23px;line-height:23px;color:#000;letter-spacing:0.255px;">Products.xmi</div>
<svg style="left:93px;top:437px" width="16" height="18" viewBox="0 0 16 18"><path d="M1 0v18L15 9z" fill="#8c8c8c"/></svg>
<svg style="left:115px;top:431px" width="30" height="30" viewBox="0 0 30 30"><path d="M2 6L14 1.500l13 4.500v16l-13 5.500-12-5.500z" fill="#b4c4e4" stroke="#6a80b0" stroke-width="1.400"/><path d="M3 6.500l11 4 12-4-12-4z" fill="#d6e0f2"/><path d="M14 10.500v17" stroke="#7a8ab8" stroke-width="1.600"/><path d="M16 12h9v3h-7v10h-2z" fill="#e8d8f0"/><rect x="18" y="15" width="11" height="14" rx="4" fill="#2d5ad8" stroke="#1a3a90" stroke-width="1.200"/><ellipse cx="23.500" cy="17" rx="5" ry="2" fill="#6a90f0"/></svg>
<div class="t" style="left:151px;top:434.9px;font-size:23px;line-height:23px;color:#000;letter-spacing:-0.194px;">US_Customers.xmi</div>
<svg style="left:59px;top:471px" width="18" height="18" viewBox="0 0 16 16"><path d="M0 2h16L8 16z" fill="#8a8a8a"/></svg>
<svg style="left:83px;top:465px" width="31" height="31" viewBox="0 0 30 30"><path d="M2 9h9l2 3h12v14H2z" fill="#f2c98a" stroke="#b58340" stroke-width="1.5"/><path d="M5 15h23l-4 11H1z" fill="#fbe3b6" stroke="#b58340" stroke-width="1.5"/></svg>
<svg style="left:82px;top:480px" width="17" height="17" viewBox="0 0 16 16"><path d="M8 1l7 14H1z" fill="#f2d22a" stroke="#3a3000" stroke-width="1"/><rect x="7.2" y="5" width="1.6" height="6" fill="#000"/><rect x="7.2" y="12" width="1.6" height="1.6" fill="#000"/></svg>
<div class="t" style="left:119px;top:468.9px;font-size:23px;line-height:23px;color:#000;letter-spacing:0.053px;">EnterpriseDataLayer</div>
<svg style="left:93px;top:505px" width="16" height="18" viewBox="0 0 16 18"><path d="M1 0v18L15 9z" fill="#8c8c8c"/></svg>
<svg style="left:115px;top:499px" width="30" height="30" viewBox="0 0 30 30"><path d="M2 6L14 1.500l13 4.500v16l-13 5.500-12-5.500z" fill="#deb534" stroke="#b08428" stroke-width="1.400"/><path d="M2 6l12 4.500 13-4.500" stroke="#b58a2a" fill="none" stroke-width="1.300"/><path d="M3 6.500l11 4 12-4-12-4z" fill="#e6c448"/><path d="M14 10.500v17" stroke="#a8782a" stroke-width="1.600"/><path d="M16 12h9v3h-7v10h-2z" fill="#f6e0a4"/><rect x="18" y="14" width="11" height="15" rx="1.500" fill="#eec060" stroke="#c88e2e" stroke-width="1.300"/><rect x="20" y="18" width="6" height="9" fill="#f6dca0"/></svg>
<div class="t" style="left:151px;top:502.9px;font-size:23px;line-height:23px;color:#000;letter-spacing:-0.583px;">EU_Customers_EDL.xmi</div>
<svg style="left:93px;top:539px" width="16" height="18" viewBox="0 0 16 18"><path d="M1 0v18L15 9z" fill="#8c8c8c"/></svg>
<svg style="left:115px;top:533px" width="30" height="30" viewBox="0 0 30 30"><path d="M2 6L14 1.500l13 4.500v16l-13 5.500-12-5.500z" fill="#deb534" stroke="#b08428" stroke-width="1.400"/><path d="M2 6l12 4.500 13-4.500" stroke="#b58a2a" fill="none" stroke-width="1.300"/><path d="M3 6.500l11 4 12-4-12-4z" fill="#e6c448"/><path d="M14 10.500v17" stroke="#a8782a" stroke-width="1.600"/><path d="M16 12h9v3h-7v10h-2z" fill="#f6e0a4"/><rect x="18" y="14" width="11" height="15" rx="1.500" fill="#eec060" stroke="#c88e2e" stroke-width="1.300"/><rect x="20" y="18" width="6" height="9" fill="#f6dca0"/></svg>
<svg style="left:114px;top:548px" width="17" height="17" viewBox="0 0 16 16"><path d="M8 1l7 14H1z" fill="#f2d22a" stroke="#3a3000" stroke-width="1"/><rect x="7.2" y="5" width="1.6" height="6" fill="#000"/><rect x="7.2" y="12" width="1.6" height="1.6" fill="#000"/></svg>
<div class="t" style="left:151px;top:536.9px;font-size:23px;line-height:23px;color:#000;letter-spacing:-0.218px;">Products_EDL.xmi</div>
<svg style="left:91px;top:573px" width="18" height="18" viewBox="0 0 16 16"><path d="M0 2h16L8 16z" fill="#8a8a8a"/></svg>
<svg style="left:115px;top:567px" width="30" height="30" viewBox="0 0 30 30"><path d="M2 6L14 1.500l13 4.500v16l-13 5.500-12-5.500z" fill="#deb534" stroke="#b08428" stroke-width="1.400"/><path d="M2 6l12 4.500 13-4.500" stroke="#b58a2a" fill="none" stroke-width="1.300"/><path d="M3 6.500l11 4 12-4-12-4z" fill="#e6c448"/><path d="M14 10.500v17" stroke="#a8782a" stroke-width="1.600"/><path d="M16 12h9v3h-7v10h-2z" fill="#f6e0a4"/><rect x="18" y="14" width="11" height="15" rx="1.500" fill="#eec060" stroke="#c88e2e" stroke-width="1.300"/><rect x="20" y="18" width="6" height="9" fill="#f6dca0"/></svg>
<svg style="left:114px;top:582px" width="17" height="17" viewBox="0 0 16 16"><path d="M8 1l7 14H1z" fill="#f2d22a" stroke="#3a3000" stroke-width="1"/><rect x="7.2" y="5" width="1.6" height="6" fill="#000"/><rect x="7.2" y="12" width="1.6" height="1.6" fill="#000"/></svg>
<div class="t" style="left:151px;top:570.9px;font-size:23px;line-height:23px;color:#000;letter-spacing:-0.483px;">US_Customers_EDL.xmi</div>
<svg style="left:125px;top:607px" width="16" height="18" viewBox="0 0 16 18"><path d="M1 0v18L15 9z" fill="#8c8c8c"/></svg>
<svg style="left:151px;top:602px" width="30" height="30" viewBox="0 0 30 30"><path d="M1 1h5L1 6z" fill="#1a2ad0"/><path d="M10 9h16M12 13h14M10 17h16M12 21h14M10 25h16" stroke="#222" stroke-width="2"/></svg>
<div class="t" style="left:183px;top:604.9px;font-size:23px;line-height:23px;color:#000;letter-spacing:0.442px;">import declarations (3)</div>
<svg style="left:150px;top:636px" width="28" height="30" viewBox="0 0 28 30"><rect x="1" y="1" width="8" height="8" fill="#fff" stroke="#222" stroke-width="2"/><rect x="18" y="1" width="8" height="8" fill="#fff" stroke="#222" stroke-width="2"/><rect x="7" y="12" width="12" height="9" fill="#2a7ab0" stroke="#222" stroke-width="2"/><path d="M5 9v10M22 9v6M1 24h26v5H1z" stroke="#222" stroke-width="2" fill="#ddd"/></svg>
<div class="t" style="left:183px;top:638.9px;font-size:23px;line-height:23px;color:#000;letter-spacing:-0.156px;">Package Diagram</div>
<svg style="left:125px;top:675px" width="16" height="18" viewBox="0 0 16 18"><path d="M1 0v18L15 9z" fill="#8c8c8c"/></svg>
<svg style="left:151px;top:671px" width="26" height="26" viewBox="0 0 26 26"><rect x="5" y="2" width="16" height="22" fill="#f5f08a" stroke="#333" stroke-width="1.6"/><path d="M8 8h10M8 12h4M14 12h4M8 16h4M14 16h4M8 20h4" stroke="#333" stroke-width="1.6"/></svg>
<div class="t" style="left:183px;top:672.9px;font-size:23px;line-height:23px;color:#000;letter-spacing:-0.817px;">ACCOUNT</div>
<svg style="left:125px;top:709px" width="16" height="18" viewBox="0 0 16 18"><path d="M1 0v18L15 9z" fill="#8c8c8c"/></svg>
<svg style="left:151px;top:705px" width="26" height="26" viewBox="0 0 26 26"><rect x="5" y="2" width="16" height="22" fill="#f5f08a" stroke="#333" stroke-width="1.6"/><path d="M8 8h10M8 12h4M14 12h4M8 16h4M14 16h4M8 20h4" stroke="#333" stroke-width="1.6"/></svg>
<div class="t" style="left:183px;top:706.9px;font-size:23px;line-height:23px;color:#000;letter-spacing:-0.657px;">ACCOUNTHOLDINGS</div>
<svg style="left:125px;top:743px" width="16" height="18" viewBox="0 0 16 18"><path d="M1 0v18L15 9z" fill="#8c8c8c"/></svg>
<svg style="left:151px;top:739px" width="26" height="26" viewBox="0 0 26 26"><rect x="5" y="2" width="16" height="22" fill="#f5f08a" stroke="#333" stroke-width="1.6"/><path d="M8 8h10M8 12h4M14 12h4M8 16h4M14 16h4M8 20h4" stroke="#333" stroke-width="1.6"/></svg>
<div class="t" style="left:183px;top:740.9px;font-size:23px;line-height:23px;color:#000;letter-spacing:-1.023px;">CUSTOMER</div>
<svg style="left:59px;top:777px" width="18" height="18" viewBox="0 0 16 16"><path d="M0 2h16L8 16z" fill="#8a8a8a"/></svg>
<svg style="left:83px;top:771px" width="31" height="31" viewBox="0 0 30 30"><path d="M2 9h9l2 3h12v14H2z" fill="#f2c98a" stroke="#b58340" stroke-width="1.5"/><path d="M5 15h23l-4 11H1z" fill="#fbe3b6" stroke="#b58340" stroke-width="1.5"/></svg>
<div class="t" style="left:119px;top:774.9px;font-size:23px;line-height:23px;color:#000;letter-spacing:0.027px;">FederatedDataLayer</div>
<svg style="left:93px;top:811px" width="16" height="18" viewBox="0 0 16 18"><path d="M1 0v18L15 9z" fill="#8c8c8c"/></svg>
<svg style="left:115px;top:805px" width="30" height="30" viewBox="0 0 30 30"><path d="M2 6L14 1.500l13 4.500v16l-13 5.500-12-5.500z" fill="#deb534" stroke="#b08428" stroke-width="1.400"/><path d="M2 6l12 4.500 13-4.500" stroke="#b58a2a" fill="none" stroke-width="1.300"/><path d="M3 6.500l11 4 12-4-12-4z" fill="#e6c448"/><path d="M14 10.500v17" stroke="#a8782a" stroke-width="1.600"/><path d="M16 12h9v3h-7v10h-2z" fill="#f6e0a4"/><rect x="18" y="14" width="11" height="15" rx="1.500" fill="#eec060" stroke="#c88e2e" stroke-width="1.300"/><rect x="20" y="18" width="6" height="9" fill="#f6dca0"/></svg>
<div class="t" style="left:151px;top:808.9px;font-size:23px;line-height:23px;color:#000;letter-spacing:-0.101px;">All_Customers.xmi</div>
<svg style="left:59px;top:845px" width="18" height="18" viewBox="0 0 16 16"><path d="M0 2h16L8 16z" fill="#8a8a8a"/></svg>
<svg style="left:83px;top:839px" width="31" height="31" viewBox="0 0 30 30"><path d="M2 9h9l2 3h12v14H2z" fill="#f2c98a" stroke="#b58340" stroke-width="1.5"/><path d="M5 15h23l-4 11H1z" fill="#fbe3b6" stroke="#b58340" stroke-width="1.5"/></svg>
<div class="t" style="left:119px;top:842.9px;font-size:23px;line-height:23px;color:#000;letter-spacing:0.099px;">Schemas</div>
<svg style="left:91px;top:879px" width="18" height="18" viewBox="0 0 16 16"><path d="M0 2h16L8 16z" fill="#8a8a8a"/></svg>
<svg style="left:115px;top:873px" width="32" height="32" viewBox="0 0 32 32"><path d="M3 8l11-6 11 6v13l-11 6-11-6z" fill="#7ac8a8" stroke="#3a8a6a" stroke-width="1.5"/><path d="M3 8l11-6 11 6-11 6z" fill="#c8ecd8"/><rect x="15" y="15" width="15" height="15" fill="#e8e0b0" stroke="#8a7a40" stroke-width="1.5"/><text x="18" y="28" font-size="13" font-weight="bold" font-family="Liberation Sans" fill="#2a3a70">S</text></svg>
<div class="t" style="left:151px;top:876.9px;font-size:23px;line-height:23px;color:#000;letter-spacing:0.130px;">DataDictionary.xsd</div>
<svg style="left:125px;top:913px" width="16" height="18" viewBox="0 0 16 18"><path d="M1 0v18L15 9z" fill="#8c8c8c"/></svg>
<svg style="left:152px;top:908px" width="24" height="30" viewBox="0 0 24 30"><path d="M1 1h16l6 6v22H1z" fill="#dfe8f8" stroke="#8a7a40" stroke-width="1.5"/><text x="5" y="23" font-size="19" font-weight="bold" font-family="Liberation Sans" fill="#2a4a90">S</text></svg>
<div class="t" style="left:183px;top:910.9px;font-size:23px;line-height:23px;color:#000;letter-spacing:0.130px;">DataDictionary.xsd</div>
<svg style="left:59px;top:947px" width="18" height="18" viewBox="0 0 16 16"><path d="M0 2h16L8 16z" fill="#8a8a8a"/></svg>
<svg style="left:83px;top:941px" width="31" height="31" viewBox="0 0 30 30"><path d="M2 9h9l2 3h12v14H2z" fill="#f2c98a" stroke="#b58340" stroke-width="1.5"/><path d="M5 15h23l-4 11H1z" fill="#fbe3b6" stroke="#b58340" stroke-width="1.5"/></svg>
<svg style="left:82px;top:956px" width="17" height="17" viewBox="0 0 16 16"><path d="M8 1l7 14H1z" fill="#f2d22a" stroke="#3a3000" stroke-width="1"/><rect x="7.2" y="5" width="1.6" height="6" fill="#000"/><rect x="7.2" y="12" width="1.6" height="1.6" fill="#000"/></svg>
<div class="t" style="left:119px;top:944.9px;font-size:23px;line-height:23px;color:#000;letter-spacing:0.028px;">VirtualBaseLayer</div>
<svg style="left:93px;top:981px" width="16" height="18" viewBox="0 0 16 18"><path d="M1 0v18L15 9z" fill="#8c8c8c"/></svg>
<svg style="left:115px;top:975px" width="30" height="30" viewBox="0 0 30 30"><path d="M2 6L14 1.500l13 4.500v16l-13 5.500-12-5.500z" fill="#deb534" stroke="#b08428" stroke-width="1.400"/><path d="M2 6l12 4.500 13-4.500" stroke="#b58a2a" fill="none" stroke-width="1.300"/><path d="M3 6.500l11 4 12-4-12-4z" fill="#e6c448"/><path d="M14 10.500v17" stroke="#a8782a" stroke-width="1.600"/><path d="M16 12h9v3h-7v10h-2z" fill="#f6e0a4"/><rect x="18" y="14" width="11" height="15" rx="1.500" fill="#eec060" stroke="#c88e2e" stroke-width="1.300"/><rect x="20" y="18" width="6" height="9" fill="#f6dca0"/></svg>
<div class="t" style="left:151px;top:978.9px;font-size:23px;line-height:23px;color:#000;letter-spacing:-0.258px;">EU_Customers_VBL.xmi</div>
<svg style="left:93px;top:1015px" width="16" height="18" viewBox="0 0 16 18"><path d="M1 0v18L15 9z" fill="#8c8c8c"/></svg>
<svg style="left:115px;top:1009px" width="30" height="30" viewBox="0 0 30 30"><path d="M2 6L14 1.500l13 4.500v16l-13 5.500-12-5.500z" fill="#deb534" stroke="#b08428" stroke-width="1.400"/><path d="M2 6l12 4.500 13-4.500" stroke="#b58a2a" fill="none" stroke-width="1.300"/><path d="M3 6.500l11 4 12-4-12-4z" fill="#e6c448"/><path d="M14 10.500v17" stroke="#a8782a" stroke-width="1.600"/><path d="M16 12h9v3h-7v10h-2z" fill="#f6e0a4"/><rect x="18" y="14" width="11" height="15" rx="1.500" fill="#eec060" stroke="#c88e2e" stroke-width="1.300"/><rect x="20" y="18" width="6" height="9" fill="#f6dca0"/></svg>
<svg style="left:114px;top:1024px" width="17" height="17" viewBox="0 0 16 16"><path d="M8 1l7 14H1z" fill="#f2d22a" stroke="#3a3000" stroke-width="1"/><rect x="7.2" y="5" width="1.6" height="6" fill="#000"/><rect x="7.2" y="12" width="1.6" height="1.6" fill="#000"/></svg>
<div class="t" style="left:151px;top:1012.9px;font-size:23px;line-height:23px;color:#000;letter-spacing:-0.207px;">MarketData_VBL.xmi</div>
<svg style="left:93px;top:1049px" width="16" height="18" viewBox="0 0 16 18"><path d="M1 0v18L15 9z" fill="#8c8c8c"/></svg>
<svg style="left:115px;top:1043px" width="30" height="30" viewBox="0 0 30 30"><path d="M2 6L14 1.500l13 4.500v16l-13 5.500-12-5.500z" fill="#deb534" stroke="#b08428" stroke-width="1.400"/><path d="M2 6l12 4.500 13-4.500" stroke="#b58a2a" fill="none" stroke-width="1.300"/><path d="M3 6.500l11 4 12-4-12-4z" fill="#e6c448"/><path d="M14 10.500v17" stroke="#a8782a" stroke-width="1.600"/><path d="M16 12h9v3h-7v10h-2z" fill="#f6e0a4"/><rect x="18" y="14" width="11" height="15" rx="1.500" fill="#eec060" stroke="#c88e2e" stroke-width="1.300"/><rect x="20" y="18" width="6" height="9" fill="#f6dca0"/></svg>
<div class="t" style="left:151px;top:1046.9px;font-size:23px;line-height:23px;color:#000;letter-spacing:-0.166px;">Products_VBL.xmi</div>
<svg style="left:91px;top:1083px" width="18" height="18" viewBox="0 0 16 16"><path d="M0 2h16L8 16z" fill="#8a8a8a"/></svg>
<svg style="left:115px;top:1077px" width="30" height="30" viewBox="0 0 30 30"><path d="M2 6L14 1.500l13 4.500v16l-13 5.500-12-5.500z" fill="#deb534" stroke="#b08428" stroke-width="1.400"/><path d="M2 6l12 4.500 13-4.500" stroke="#b58a2a" fill="none" stroke-width="1.300"/><path d="M3 6.500l11 4 12-4-12-4z" fill="#e6c448"/><path d="M14 10.500v17" stroke="#a8782a" stroke-width="1.600"/><path d="M16 12h9v3h-7v10h-2z" fill="#f6e0a4"/><rect x="18" y="14" width="11" height="15" rx="1.500" fill="#eec060" stroke="#c88e2e" stroke-width="1.300"/><rect x="20" y="18" width="6" height="9" fill="#f6dca0"/></svg>
<div class="t" style="left:151px;top:1080.9px;font-size:23px;line-height:23px;color:#000;letter-spacing:-0.258px;">US_Customers_VBL.xmi</div>
<svg style="left:125px;top:1117px" width="16" height="18" viewBox="0 0 16 18"><path d="M1 0v18L15 9z" fill="#8c8c8c"/></svg>
<svg style="left:151px;top:1112px" width="30" height="30" viewBox="0 0 30 30"><path d="M1 1h5L1 6z" fill="#1a2ad0"/><path d="M10 9h16M12 13h14M10 17h16M12 21h14M10 25h16" stroke="#222" stroke-width="2"/></svg>
<div class="t" style="left:183px;top:1114.9px;font-size:23px;line-height:23px;color:#000;letter-spacing:0.442px;">import declarations (3)</div>
<svg style="left:150px;top:1146px" width="28" height="30" viewBox="0 0 28 30"><rect x="1" y="1" width="8" height="8" fill="#fff" stroke="#222" stroke-width="2"/><rect x="18" y="1" width="8" height="8" fill="#fff" stroke="#222" stroke-width="2"/><rect x="7" y="12" width="12" height="9" fill="#2a7ab0" stroke="#222" stroke-width="2"/><path d="M5 9v10M22 9v6M1 24h26v5H1z" stroke="#222" stroke-width="2" fill="#ddd"/></svg>
<div class="t" style="left:183px;top:1148.9px;font-size:23px;line-height:23px;color:#000;letter-spacing:-0.156px;">Package Diagram</div>
<svg style="left:125px;top:1185px" width="16" height="18" viewBox="0 0 16 18"><path d="M1 0v18L15 9z" fill="#8c8c8c"/></svg>
<svg style="left:151px;top:1181px" width="26" height="26" viewBox="0 0 26 26"><rect x="5" y="2" width="16" height="22" fill="#f5f08a" stroke="#333" stroke-width="1.6"/><path d="M8 8h10M8 12h4M14 12h4M8 16h4M14 16h4M8 20h4" stroke="#333" stroke-width="1.6"/></svg>
<div class="t" style="left:183px;top:1182.9px;font-size:23px;line-height:23px;color:#000;letter-spacing:-0.817px;">ACCOUNT</div>
<svg style="left:125px;top:1219px" width="16" height="18" viewBox="0 0 16 18"><path d="M1 0v18L15 9z" fill="#8c8c8c"/></svg>
<svg style="left:151px;top:1215px" width="26" height="26" viewBox="0 0 26 26"><rect x="5" y="2" width="16" height="22" fill="#f5f08a" stroke="#333" stroke-width="1.6"/><path d="M8 8h10M8 12h4M14 12h4M8 16h4M14 16h4M8 20h4" stroke="#333" stroke-width="1.6"/></svg>
<div class="t" style="left:183px;top:1216.9px;font-size:23px;line-height:23px;color:#000;letter-spacing:-0.657px;">ACCOUNTHOLDINGS</div>
<svg style="left:125px;top:1253px" width="16" height="18" viewBox="0 0 16 18"><path d="M1 0v18L15 9z" fill="#8c8c8c"/></svg>
<svg style="left:151px;top:1249px" width="26" height="26" viewBox="0 0 26 26"><rect x="5" y="2" width="16" height="22" fill="#f5f08a" stroke="#333" stroke-width="1.6"/><path d="M8 8h10M8 12h4M14 12h4M8 16h4M14 16h4M8 20h4" stroke="#333" stroke-width="1.6"/></svg>
<div class="t" style="left:183px;top:1250.9px;font-size:23px;line-height:23px;color:#000;letter-spacing:-1.023px;">CUSTOMER</div>
<svg style="left:83px;top:1281px" width="31" height="31" viewBox="0 0 30 30"><path d="M2 9h9l2 3h12v14H2z" fill="#f2c98a" stroke="#b58340" stroke-width="1.5"/><path d="M5 15h23l-4 11H1z" fill="#fbe3b6" stroke="#b58340" stroke-width="1.5"/></svg>
<div class="t" style="left:119px;top:1284.9px;font-size:23px;line-height:23px;color:#000;letter-spacing:0.015px;">WebServices</div>
<div style="left:12px;top:1429px;width:943px;height:57px;background:linear-gradient(rgba(225,236,249,1),rgba(255,255,255,0));border-radius:7px 7px 0 0"></div>
<div style="left:12px;top:1429px;width:943px;height:57px;border-radius:7px 7px 0 0;border:2px solid #b3cff0;border-bottom:none;-webkit-mask-image:linear-gradient(#000 20%,transparent);mask-image:linear-gradient(#000 20%,transparent)"></div>
<svg style="left:21px;top:1441px" width="18" height="12" viewBox="0 0 18 12"><path d="M1 1h16L9 11z" fill="#5a6a80"/></svg>
<div class="t" style="left:59px;top:1442.9px;font-size:23px;line-height:23px;color:#101a6e;font-weight:bold;letter-spacing:0.430px;">Default Server</div>
<div style="left:908px;top:1434px;width:36px;height:36px;background:#fff"></div>
<svg style="left:910px;top:1436px" width="32" height="32" viewBox="0 0 32 32"><rect x="13.5" y="0" width="5" height="7" fill="#a8b0b0" transform="rotate(0 16 16)"/><rect x="13.5" y="0" width="5" height="7" fill="#a8b0b0" transform="rotate(45 16 16)"/><rect x="13.5" y="0" width="5" height="7" fill="#a8b0b0" transform="rotate(90 16 16)"/><rect x="13.5" y="0" width="5" height="7" fill="#a8b0b0" transform="rotate(135 16 16)"/><rect x="13.5" y="0" width="5" height="7" fill="#a8b0b0" transform="rotate(180 16 16)"/><rect x="13.5" y="0" width="5" height="7" fill="#a8b0b0" transform="rotate(225 16 16)"/><rect x="13.5" y="0" width="5" height="7" fill="#a8b0b0" transform="rotate(270 16 16)"/><rect x="13.5" y="0" width="5" height="7" fill="#a8b0b0" transform="rotate(315 16 16)"/><circle cx="16" cy="16" r="10.500" fill="#a8b0b0"/><circle cx="16" cy="16" r="6" fill="none" stroke="#c0c6c6" stroke-width="2"/><circle cx="16" cy="16" r="2.500" fill="#fff"/></svg>
<div class="t" style="left:29px;top:1485.9px;font-size:23px;line-height:23px;color:#101a6e;letter-spacing:-0.350px;">Name:</div>
<svg style="left:119px;top:1482px" width="27" height="32" viewBox="0 0 27 32"><rect x="7" y="1" width="15" height="28" fill="#d8e0d8" stroke="#5a6a5a" stroke-width="1.5"/><path d="M11 9v12l8-6z" fill="#2aa84a"/><circle cx="4" cy="8" r="2.500" fill="#d01"/><circle cx="3" cy="16" r="2.500" fill="#d01"/><circle cx="9" cy="28" r="3" fill="#d01"/><circle cx="20" cy="29" r="3" fill="#d01"/></svg>
<div class="t" style="left:165px;top:1485.9px;font-size:23px;line-height:23px;color:#1a1ae6;letter-spacing:0.317px;text-decoration:underline;text-underline-offset:2px">Red Hat JBoss Data Virtualization 6.3.0</div>
<div class="t" style="left:29px;top:1531.9px;font-size:23px;line-height:23px;color:#101a6e;letter-spacing:0.155px;">Teiid Version:</div>
<svg style="left:192px;top:1532px" width="33" height="31" viewBox="0 0 33 31"><path d="M3 12c2-8 12-11 20-9 5 1 8 5 7 9l-2 17h-5l-2-9-5 9h-5l2-8c-5 0-9-3-10-9z" fill="#c0c8d8" stroke="#5a6a8a" stroke-width="1"/><path d="M22 8l6 3-1 18h-4z" fill="#2a3a6a"/><circle cx="6" cy="26" r="5" fill="#2a8af0"/></svg>
<div class="t" style="left:241px;top:1536.4px;font-size:24px;line-height:24px;color:#000;font-weight:bold;letter-spacing:1.547px;">8.12.5</div>
<div style="left:6px;top:1577px;width:210px;height:49px;background:linear-gradient(#dadde6,#f2f3f7 70%,#fff);border-radius:12px 12px 0 0;border:1px solid #d0d4de;border-bottom:none"></div>
<svg style="left:17px;top:1588px" width="30" height="26" viewBox="0 0 30 26"><rect x="1" y="1" width="28" height="24" fill="#f4f4f4" stroke="#5a6a8a" stroke-width="2"/><rect x="1" y="1" width="28" height="5" fill="#9aaac8"/><path d="M1 12h28M1 18h28M10 6v19" stroke="#5a6a8a" stroke-width="1.5"/></svg>
<div class="t" style="left:56px;top:1592.9px;font-size:23px;line-height:23px;color:#000;letter-spacing:0.216px;">Properties</div>
<svg style="left:180px;top:1594px" width="21" height="21" viewBox="0 0 22 22"><path d="M4 4l14 14M18 4L4 18" stroke="#111" stroke-width="6.500" stroke-linecap="square"/><path d="M4 4l14 14M18 4L4 18" stroke="#fff" stroke-width="3" stroke-linecap="square"/></svg>
<svg style="left:229px;top:1589px" width="24" height="30" viewBox="0 0 24 30"><path d="M1 1h15l7 7v21H1z" fill="#fafafa" stroke="#b8b8b8" stroke-width="1.5"/><path d="M5 12h13M5 16h13M5 20h13M5 24h13" stroke="#9ab8b0" stroke-width="1.5"/></svg>
<div class="t" style="left:264px;top:1592.9px;font-size:23px;line-height:23px;color:#777;letter-spacing:0.358px;">Description</div>
<svg style="left:405px;top:1589px" width="33" height="32" viewBox="0 0 33 32"><path d="M2 7h22v21H2z" fill="#e0d8c0" stroke="#a89870"/><path d="M14 3h18v22H14z" fill="#e8a8a8" stroke="#c88" /><circle cx="18" cy="24" r="6" fill="#f0d040"/></svg>
<div class="t" style="left:444px;top:1592.9px;font-size:23px;line-height:23px;color:#777;letter-spacing:0.297px;">Status</div>
<svg style="left:638px;top:1588px" width="34" height="33" viewBox="0 0 34 33"><rect x="1" y="8" width="27" height="23" fill="#fff" stroke="#7a6a40" stroke-width="1.5"/><rect x="1" y="8" width="27" height="5" fill="#5a8ac8"/><path d="M22 14l9-10" stroke="#3a9a3a" stroke-width="4"/><circle cx="30" cy="4" r="3.500" fill="#3a9a3a"/></svg>
<div style="left:677px;top:1581px;width:42px;height:42px;background:#dedede;border:1px solid #a8a8a8"></div>
<svg style="left:684px;top:1588px" width="28" height="28" viewBox="0 0 28 28"><path d="M3 2v22M3 7h6M3 15h6M3 23h6" stroke="#4a6aa0" stroke-width="2"/><rect x="10" y="4" width="7" height="5" fill="#8ab0e0"/><path d="M13 13h13M13 21h13" stroke="#4a6aa0" stroke-width="2.500" stroke-dasharray="4 2"/></svg>
<svg style="left:726px;top:1588px" width="34" height="33" viewBox="0 0 34 33"><path d="M1 6h14M1 28h14M11 1v10M11 23v10" stroke="#333" stroke-width="2"/><path d="M12 13h10v-5l10 9-10 9v-5H12z" fill="#fcd880" stroke="#c88a20" stroke-width="1.5"/></svg>
<svg style="left:772px;top:1588px" width="32" height="33" viewBox="0 0 32 33"><rect x="1" y="1" width="25" height="22" fill="#f4f4f4" stroke="#dcdcdc" stroke-width="1.5"/><path d="M14 26a7 7 0 1 0 10-8" stroke="#e0e0e0" stroke-width="3" fill="none"/></svg>
<svg style="left:832px;top:1592px" width="20" height="11" viewBox="0 0 20 11"><path d="M1 1h18L10 10z" fill="none" stroke="#111" stroke-width="2"/></svg>
<div style="left:869px;top:1592px;width:21px;height:8px;border:2px solid #111"></div>
<div style="left:913px;top:1592px;width:21px;height:20px;border:2px solid #111"></div>
<div style="left:915px;top:1596px;width:17px;height:1.5px;background:#111"></div>
<div style="left:12px;top:1632px;width:943px;height:2px;background:#e4e4e4"></div>
<div class="t" style="left:17px;top:1636.9px;font-size:23px;line-height:23px;color:#000;letter-spacing:0.383px;">Property</div>
<div style="left:386px;top:1640px;width:2px;height:686px;background:#c8c8c8"></div>
<div style="left:945px;top:1640px;width:2px;height:686px;background:#d0d0d0"></div>
<div class="t" style="left:393px;top:1636.9px;font-size:23px;line-height:23px;color:#000;letter-spacing:-0.028px;">Value</div>
<div style="left:12px;top:1664px;width:943px;height:2px;background:#dcdcdc"></div>
<div style="left:12px;top:1695px;width:933px;height:30px;background:#f3f3f3"></div>
<div style="left:12px;top:1755px;width:933px;height:30px;background:#f3f3f3"></div>
<div style="left:12px;top:1815px;width:933px;height:30px;background:#f3f3f3"></div>
<div style="left:12px;top:1875px;width:933px;height:30px;background:#f3f3f3"></div>
<div style="left:12px;top:1935px;width:933px;height:30px;background:#f3f3f3"></div>
<div style="left:12px;top:1995px;width:933px;height:30px;background:#f3f3f3"></div>
<div style="left:12px;top:2055px;width:933px;height:30px;background:#f3f3f3"></div>
<div style="left:12px;top:2115px;width:933px;height:30px;background:#f3f3f3"></div>
<div style="left:12px;top:2175px;width:933px;height:30px;background:#f3f3f3"></div>
<div style="left:12px;top:2235px;width:933px;height:30px;background:#f3f3f3"></div>
<div style="left:12px;top:2295px;width:933px;height:30px;background:#f3f3f3"></div>
<div style="left:386px;top:1640px;width:2px;height:686px;background:#c8c8c8"></div>
<svg style="left:23px;top:1672px" width="18" height="15" viewBox="0 0 18 15"><path d="M0 0h18L9 15z" fill="#8c8c8c"/></svg>
<div class="t" style="left:48px;top:1668.9px;font-size:23px;line-height:23px;color:#000;letter-spacing:-0.094px;">Info</div>
<div class="t" style="left:80px;top:1698.9px;font-size:23px;line-height:23px;color:#000;letter-spacing:-0.048px;">Object URI</div>
<svg style="left:23px;top:1732px" width="18" height="15" viewBox="0 0 18 15"><path d="M0 0h18L9 15z" fill="#8c8c8c"/></svg>
<div class="t" style="left:48px;top:1728.9px;font-size:23px;line-height:23px;color:#000;letter-spacing:0.084px;">Misc</div>
<div class="t" style="left:80px;top:1758.9px;font-size:23px;line-height:23px;color:#000;letter-spacing:0.402px;">Output is read-only</div>
<svg style="left:397px;top:1759px" width="26" height="22" viewBox="0 0 26 22"><rect x="1" y="1" width="24" height="20" fill="#e8eef8" stroke="#8aa0c0"/><path d="M4 4v14h8M9 12l3 5 6-12M14 18l8-8M14 10l8 8" stroke="#2a5aa0" stroke-width="1.5" fill="none"/></svg>
<div class="t" style="left:427px;top:1758.9px;font-size:23px;line-height:23px;color:#000;letter-spacing:-0.039px;">false</div>
<div class="t" style="left:80px;top:1788.9px;font-size:23px;line-height:23px;color:#000;letter-spacing:0.260px;">Target</div>
<svg style="left:399px;top:1788px" width="24" height="24" viewBox="0 0 26 26"><rect x="5" y="2" width="16" height="22" fill="#f5f08a" stroke="#333" stroke-width="1.6"/><path d="M8 8h10M8 12h4M14 12h4M8 16h4M14 16h4M8 20h4" stroke="#333" stroke-width="1.6"/></svg>
<div class="t" style="left:427px;top:1788.9px;font-size:23px;line-height:23px;color:#000;letter-spacing:-0.086px;">CUSTOMER (Path=/Financials/FederatedDataL...</div>
<div class="t" style="left:80px;top:1818.9px;font-size:23px;line-height:23px;color:#000;letter-spacing:0.547px;">Top to bottom</div>
<svg style="left:397px;top:1819px" width="26" height="22" viewBox="0 0 26 22"><rect x="1" y="1" width="24" height="20" fill="#e8eef8" stroke="#8aa0c0"/><path d="M4 4v14h8M9 12l3 5 6-12M14 18l8-8M14 10l8 8" stroke="#2a5aa0" stroke-width="1.5" fill="none"/></svg>
<div class="t" style="left:427px;top:1818.9px;font-size:23px;line-height:23px;color:#000;letter-spacing:-0.039px;">false</div>
<svg style="left:60px;top:1851px" width="15" height="17" viewBox="0 0 15 17"><path d="M0 0v17l15-8.500z" fill="#8c8c8c"/></svg>
<div class="t" style="left:80px;top:1848.9px;font-size:23px;line-height:23px;color:#000;letter-spacing:0.262px;">Transformation</div>
<svg style="left:398px;top:1848px" width="24" height="24" viewBox="0 0 24 24"><path d="M12 1l11 11-11 11L1 12z" fill="#f0a020" stroke="#6a4000" stroke-width="1.5"/><path d="M8 8h8M12 8v9" stroke="#222" stroke-width="2"/></svg>
<div class="t" style="left:427px;top:1848.9px;font-size:23px;line-height:23px;color:#000;letter-spacing:-0.026px;">SQL (Path=/Financials/FederatedDataLayer/All_...</div>
<div class="t" style="left:7px;top:2350.9px;font-size:23px;line-height:23px;color:#000;letter-spacing:0.199px;">SqlTransformationMappingRoot: All_Customers/Container/SQL Transformation Mapping Root</div>
<div style="left:3078px;top:2348px;width:2px;height:44px;background:#a0a0a0"></div>
<div class="t" style="left:3095px;top:2350.9px;font-size:23px;line-height:23px;color:#000;letter-spacing:0.047px;">Writable</div>
<div style="left:3271px;top:2352px;width:3px;height:3px;background:#999"></div>
<div style="left:3271px;top:2358px;width:3px;height:3px;background:#999"></div>
<div style="left:3271px;top:2364px;width:3px;height:3px;background:#999"></div>
<div style="left:3271px;top:2370px;width:3px;height:3px;background:#999"></div>
<svg style="left:3782px;top:2349px" width="32" height="32" viewBox="0 0 32 32"><rect x="1" y="1" width="22" height="14" fill="#9ad8a8" stroke="#8a8a7a"/><rect x="5" y="5" width="22" height="14" fill="#9ad8a8" stroke="#8a8a7a"/><rect x="9" y="9" width="22" height="14" fill="#5ac868" stroke="#8a8a7a"/><circle cx="22" cy="24" r="7.500" fill="#e05050"/><path d="M19 21l6 6M25 21l-6 6" stroke="#fff" stroke-width="1.5"/></svg>
<div style="left:972px;top:161px;width:1854px;height:49px;background:linear-gradient(#f3f3f3,#dcdcdc);border-radius:10px 10px 0 0"></div>
<div style="left:972px;top:209px;width:1854px;height:2px;background:#b4c0d4"></div>
<svg style="left:982px;top:173px" width="30" height="30" viewBox="0 0 30 30"><path d="M2 6L14 1.500l13 4.500v16l-13 5.500-12-5.500z" fill="#deb534" stroke="#b08428" stroke-width="1.400"/><path d="M2 6l12 4.500 13-4.500" stroke="#b58a2a" fill="none" stroke-width="1.300"/><path d="M3 6.500l11 4 12-4-12-4z" fill="#e6c448"/><path d="M14 10.500v17" stroke="#a8782a" stroke-width="1.600"/><path d="M16 12h9v3h-7v10h-2z" fill="#f6e0a4"/><rect x="18" y="14" width="11" height="15" rx="1.500" fill="#eec060" stroke="#c88e2e" stroke-width="1.300"/><rect x="20" y="18" width="6" height="9" fill="#f6dca0"/></svg>
<div class="t" style="left:1021px;top:176.9px;font-size:23px;line-height:23px;color:#000;letter-spacing:-0.696px;">US_Customers_VB</div>
<svg style="left:1271px;top:173px" width="30" height="30" viewBox="0 0 30 30"><path d="M2 6L14 1.500l13 4.500v16l-13 5.500-12-5.500z" fill="#deb534" stroke="#b08428" stroke-width="1.400"/><path d="M2 6l12 4.500 13-4.500" stroke="#b58a2a" fill="none" stroke-width="1.300"/><path d="M3 6.500l11 4 12-4-12-4z" fill="#e6c448"/><path d="M14 10.500v17" stroke="#a8782a" stroke-width="1.600"/><path d="M16 12h9v3h-7v10h-2z" fill="#f6e0a4"/><rect x="18" y="14" width="11" height="15" rx="1.500" fill="#eec060" stroke="#c88e2e" stroke-width="1.300"/><rect x="20" y="18" width="6" height="9" fill="#f6dca0"/></svg>
<div class="t" style="left:1310px;top:176.9px;font-size:23px;line-height:23px;color:#000;letter-spacing:-0.207px;">Products_VBL.xm</div>
<svg style="left:1551px;top:173px" width="30" height="30" viewBox="0 0 30 30"><path d="M2 6L14 1.500l13 4.500v16l-13 5.500-12-5.500z" fill="#deb534" stroke="#b08428" stroke-width="1.400"/><path d="M2 6l12 4.500 13-4.500" stroke="#b58a2a" fill="none" stroke-width="1.300"/><path d="M3 6.500l11 4 12-4-12-4z" fill="#e6c448"/><path d="M14 10.500v17" stroke="#a8782a" stroke-width="1.600"/><path d="M16 12h9v3h-7v10h-2z" fill="#f6e0a4"/><rect x="18" y="14" width="11" height="15" rx="1.500" fill="#eec060" stroke="#c88e2e" stroke-width="1.300"/><rect x="20" y="18" width="6" height="9" fill="#f6dca0"/></svg>
<div class="t" style="left:1591px;top:176.9px;font-size:23px;line-height:23px;color:#000;letter-spacing:-0.762px;">EU_Customers_VB</div>
<svg style="left:1844px;top:173px" width="24" height="30" viewBox="0 0 24 30"><path d="M1 1h16l6 6v22H1z" fill="#dfe8f8" stroke="#8a7a40" stroke-width="1.5"/><text x="5" y="23" font-size="19" font-weight="bold" font-family="Liberation Sans" fill="#2a4a90">S</text></svg>
<div class="t" style="left:1878px;top:176.9px;font-size:23px;line-height:23px;color:#000;letter-spacing:0.230px;">DataDictionary.</div>
<svg style="left:2101px;top:173px" width="30" height="30" viewBox="0 0 30 30"><path d="M2 6L14 1.500l13 4.500v16l-13 5.500-12-5.500z" fill="#deb534" stroke="#b08428" stroke-width="1.400"/><path d="M2 6l12 4.500 13-4.500" stroke="#b58a2a" fill="none" stroke-width="1.300"/><path d="M3 6.500l11 4 12-4-12-4z" fill="#e6c448"/><path d="M14 10.500v17" stroke="#a8782a" stroke-width="1.600"/><path d="M16 12h9v3h-7v10h-2z" fill="#f6e0a4"/><rect x="18" y="14" width="11" height="15" rx="1.500" fill="#eec060" stroke="#c88e2e" stroke-width="1.300"/><rect x="20" y="18" width="6" height="9" fill="#f6dca0"/></svg>
<div class="t" style="left:2138px;top:176.9px;font-size:23px;line-height:23px;color:#000;letter-spacing:-0.158px;">Products_EDL.xm</div>
<div style="left:2373px;top:162px;width:264px;height:50px;background:#fff;border:2px solid #b8c4d8;border-bottom:none;border-radius:10px 10px 0 0"></div>
<svg style="left:2383px;top:173px" width="30" height="30" viewBox="0 0 30 30"><path d="M2 6L14 1.500l13 4.500v16l-13 5.500-12-5.500z" fill="#deb534" stroke="#b08428" stroke-width="1.400"/><path d="M2 6l12 4.500 13-4.500" stroke="#b58a2a" fill="none" stroke-width="1.300"/><path d="M3 6.500l11 4 12-4-12-4z" fill="#e6c448"/><path d="M14 10.500v17" stroke="#a8782a" stroke-width="1.600"/><path d="M16 12h9v3h-7v10h-2z" fill="#f6e0a4"/><rect x="18" y="14" width="11" height="15" rx="1.500" fill="#eec060" stroke="#c88e2e" stroke-width="1.300"/><rect x="20" y="18" width="6" height="9" fill="#f6dca0"/></svg>
<div class="t" style="left:2421px;top:176.9px;font-size:23px;line-height:23px;color:#000;letter-spacing:-0.127px;">*All_Customers.</div>
<svg style="left:2600px;top:178px" width="21" height="21" viewBox="0 0 22 22"><path d="M4 4l14 14M18 4L4 18" stroke="#111" stroke-width="6.500" stroke-linecap="square"/><path d="M4 4l14 14M18 4L4 18" stroke="#fff" stroke-width="3" stroke-linecap="square"/></svg>
<svg style="left:2664px;top:172px" width="28" height="30" viewBox="0 0 28 30"><path d="M2 2l5 4-5 4M9 2l5 4-5 4" stroke="#333" stroke-width="2.5" fill="none"/></svg>
<div class="t" style="left:2678px;top:191.3px;font-size:18px;line-height:18px;color:#444;">4</div>
<div style="left:2736px;top:176px;width:21px;height:8px;border:2px solid #111"></div>
<div style="left:2780px;top:176px;width:21px;height:20px;border:2px solid #111"></div>
<div style="left:2782px;top:180px;width:17px;height:1.5px;background:#111"></div>
<div style="left:976px;top:216px;width:1847px;height:878px;background:#fff;border:2px solid #9a9a9a;border-bottom:none"></div>
<div style="left:978px;top:218px;width:1843px;height:876px;border:4px solid #b3d7fb;border-bottom:none"></div>
<div style="left:986px;top:226px;width:1822px;height:864px;background:#d4d4d4;border-top:2px solid #777;border-left:2px solid #777"></div>
<div style="left:1052px;top:228px;width:5px;height:862px;background:#000"></div>
<div style="left:1051px;top:228px;width:2px;height:862px;background:#888"></div>
<div style="left:1057px;top:228px;width:622px;height:862px;background:#2cfdfd"></div>
<div style="left:1679px;top:228px;width:1127px;height:862px;background:#b0dbf8"></div>
<div style="left:1057px;top:228px;width:1749px;height:2.5px;background:#000"></div>
<div style="left:1057px;top:282px;width:1749px;height:2.5px;background:#000"></div>
<div style="left:1678px;top:228px;width:2px;height:862px;background:#000"></div>
<div style="left:2806px;top:228px;width:6px;height:868px;background:linear-gradient(90deg,#8c8c8c,#c8c8c8)"></div>
<div style="left:988px;top:1090px;width:1824px;height:6px;background:linear-gradient(#8c8c8c,#c8c8c8)"></div>
<div style="left:2812px;top:218px;width:4px;height:878px;background:#fff"></div>
<div style="left:2816px;top:218px;width:6px;height:878px;background:#b3d7fb"></div>
<div style="left:2821px;top:216px;width:2px;height:880px;background:#9a9a9a"></div>
<div class="t" style="left:1331px;top:246.0px;font-size:28px;line-height:28px;color:#9a9a9a;font-weight:bold;letter-spacing:0.113px;">VIEW</div>
<div class="t" style="left:1799px;top:246.0px;font-size:28px;line-height:28px;color:#9a9a9a;font-weight:bold;letter-spacing:-0.350px;">SOURCES</div>
<svg style="left:996px;top:236px" width="32" height="32" viewBox="0 0 32 32"><path d="M13 9.500C6 10 3 14 4 18.500 5 22 9 24 12 24" stroke="#7a6a30" stroke-width="4.500" fill="none"/><path d="M13 9.500C6 10 3 14 4 18.500 5 22 9 24 12 24" stroke="#e8d070" stroke-width="2" fill="none"/><path d="M19 24.500C26 24 29 20 28 15.500 27 12 23 10 20 10" stroke="#7a6a30" stroke-width="4.500" fill="none"/><path d="M19 24.500C26 24 29 20 28 15.500 27 12 23 10 20 10" stroke="#e8d070" stroke-width="2" fill="none"/><path d="M10 8h17v4H19l-1 5-8-7 8-9z" fill="#f8e838" stroke="#7a5a20" stroke-width="1.500" stroke-linejoin="round"/><path d="M22 26H5v-4h8l1-5 8 7-8 9z" fill="#f8e838" stroke="#7a5a20" stroke-width="1.500" stroke-linejoin="round"/></svg>
<svg style="left:996px;top:284px" width="30" height="24" viewBox="0 0 30 24"><path d="M1 5h9l2 3h17v15H1z" fill="#e8d060" stroke="#8a7020" stroke-width="1.5"/><path d="M9 11l-4 4 4 4M5 15h6v5h12" stroke="#111" stroke-width="2" fill="none"/></svg>
<div style="left:988px;top:322px;width:48px;height:2px;background:#bdbdbd"></div>
<svg style="left:996px;top:336px" width="32" height="30" viewBox="0 0 32 30"><rect x="5" y="3" width="26" height="26" fill="#dcdcdc" stroke="#a0a0b8" stroke-width="1.5"/><path d="M1 5h8M5 1v8" stroke="#6a7af0" stroke-width="2"/><path d="M10 10h14M14 17l10 6" stroke="#a8a8c0" stroke-width="4"/></svg>
<svg style="left:996px;top:380px" width="32" height="30" viewBox="0 0 32 30"><rect x="5" y="3" width="26" height="26" fill="#dcdcdc" stroke="#a0a0b8" stroke-width="1.5"/><path d="M1 5h8M5 1v8" stroke="#6a7af0" stroke-width="2"/><path d="M13 8v14h10V8" stroke="#888" stroke-width="4" fill="none"/></svg>
<svg style="left:996px;top:426px" width="32" height="30" viewBox="0 0 32 30"><rect x="5" y="3" width="26" height="26" fill="#dcdcdc" stroke="#a0a0b8" stroke-width="1.5"/><path d="M1 5h8" stroke="#6a7af0" stroke-width="2"/><path d="M10 10h14M14 17l10 6" stroke="#a8a8c0" stroke-width="4"/></svg>
<svg style="left:996px;top:469px" width="32" height="30" viewBox="0 0 32 30"><rect x="6" y="4" width="24" height="25" fill="#fff" stroke="#2a3a80" stroke-width="1.500"/><path d="M2 20l12-16 5 3-10 15z" fill="#c8c8c8" stroke="#777"/><path d="M14 24l4-3 4 3 4-3" stroke="#2a3a80" stroke-width="1.5" fill="none"/></svg>
<svg style="left:994px;top:511px" width="36" height="34" viewBox="0 0 36 34"><rect x="1" y="1" width="11" height="16" fill="#f0901a" stroke="#111" stroke-width="1.5"/><path d="M16 5h8v6M20 13h-4v6h8" stroke="#111" stroke-width="2" fill="none"/><path d="M26 18l6 6-6 6-6-6z" fill="#f0901a" stroke="#8a4a00"/></svg>
<div style="left:988px;top:554px;width:48px;height:2px;background:#bdbdbd"></div>
<svg style="left:996px;top:571px" width="32" height="30" viewBox="0 0 32 30"><rect x="1" y="1" width="22" height="20" rx="2" fill="#c8d4ec" stroke="#7a8fba" stroke-width="1.5"/><rect x="12" y="14" width="18" height="14" fill="#fff" stroke="#2a3a80" stroke-width="1.500"/><path d="M15 20h6M18 24h8" stroke="#2a3a80" stroke-width="1.5"/></svg>
<div style="left:978px;top:1096px;width:1843px;height:5px;background:#fff"></div>
<div style="left:986px;top:1100px;width:1830px;height:42px;background:#d6d6d6;border-top:2px solid #9a9a9a"></div>
<div style="left:982px;top:1096px;width:309px;height:46px;background:#fff;border-right:2px solid #9a9a9a;border-radius:0 0 8px 0"></div>
<svg style="left:992px;top:1106px" width="30" height="27" viewBox="0 0 30 27"><rect x="1" y="9" width="7" height="9" fill="#f8c830" stroke="#111" stroke-width="1.500"/><rect x="22" y="1" width="6" height="7" fill="#f8c830" stroke="#111" stroke-width="1.500"/><rect x="22" y="10" width="6" height="7" fill="#f8c830" stroke="#111" stroke-width="1.500"/><rect x="22" y="19" width="6" height="7" fill="#f8c830" stroke="#111" stroke-width="1.500"/><path d="M8 13h4l10-9M12 13l10 0M12 13l10 9" stroke="#333" stroke-width="1.2" fill="none"/></svg>
<div class="t" style="left:1031px;top:1108.9px;font-size:23px;line-height:23px;color:#000;letter-spacing:0.448px;">Transformation Diagram</div>
<div style="left:1472px;top:1102px;width:2px;height:40px;background:#9a9a9a"></div>
<svg style="left:1302px;top:1108px" width="28" height="26" viewBox="0 0 28 26"><rect x="1" y="1" width="26" height="24" fill="#f4f4f4" stroke="#777" stroke-width="2"/><rect x="1" y="1" width="26" height="4" fill="#999"/><path d="M1 10h26M1 15h26M1 20h26M9 5v20M18 5v20" stroke="#bbb" stroke-width="1.5"/></svg>
<div class="t" style="left:1341px;top:1108.9px;font-size:23px;line-height:23px;color:#000;letter-spacing:0.210px;">Table Editor</div>
<div style="left:978px;top:1142px;width:1843px;height:4px;background:#b3d7fb"></div>
<div style="left:976px;top:1146px;width:1847px;height:2px;background:#9a9a9a"></div>
<div style="left:976px;top:1148px;width:1847px;height:6px;background:#dedede"></div>
<div style="left:976px;top:1154px;width:1847px;height:624px;background:#d6d6d6;border:2px solid #9a9a9a"></div>
<div style="left:978px;top:1156px;width:1843px;height:620px;border:4px solid #b3d7fb"></div>
<div style="left:982px;top:1206px;width:1835px;height:2px;background:#a0a0a0"></div>
<div class="t" style="left:989px;top:1170.9px;font-size:23px;line-height:23px;color:#000;letter-spacing:0.366px;">Transformation Editor</div>
<svg style="left:1611px;top:1166px" width="32" height="32" viewBox="0 0 32 32"><rect x="1" y="1" width="26" height="24" fill="#dde4f0" stroke="#6a7aa0" stroke-width="1.5"/><rect x="1" y="1" width="26" height="5" fill="#6a8ac8"/><path d="M6 24l5-8 4 3 4-8" stroke="#223" stroke-width="2.5" fill="none"/><circle cx="24" cy="24" r="7" fill="#f0b030" stroke="#7a5000"/></svg>
<div style="left:1655px;top:1166px;width:2px;height:34px;background:#c4c4c4"></div>
<svg style="left:1666px;top:1167px" width="33" height="30" viewBox="0 0 33 30"><path d="M4 28l6-14 14-13 7 6-13 14z" fill="#e8c070" stroke="#8a6a30" stroke-width="1.5"/><path d="M2 29l4-10 7 6z" fill="#fff4c0"/><circle cx="4" cy="8" r="2.5" fill="#111"/><circle cx="30" cy="22" r="2.500" fill="#111"/></svg>
<svg style="left:1710px;top:1166px" width="33" height="33" viewBox="0 0 33 33"><rect x="1" y="1" width="30" height="23" fill="#fff" stroke="#111" stroke-width="2"/><rect x="1" y="1" width="30" height="5" fill="#3a8ab0"/><path d="M6 11h8M6 16h14" stroke="#333" stroke-width="1.5"/><path d="M24 17l8 8-8 8-8-8z" fill="#f08a10" stroke="#6a3a00"/></svg>
<div style="left:1756px;top:1166px;width:2px;height:34px;background:#c4c4c4"></div>
<div class="t" style="left:1766px;top:1170.9px;font-size:23px;line-height:23px;color:#000;letter-spacing:0.333px;">Cursor at (1, 1)</div>
<div style="left:1999px;top:1166px;width:2px;height:34px;background:#c4c4c4"></div>
<div style="left:2010px;top:1170px;width:24px;height:24px;background:#fff;border:1.5px solid #aaa;border-radius:5px"></div>
<div class="t" style="left:2045px;top:1170.9px;font-size:23px;line-height:23px;color:#000;letter-spacing:0.223px;">Supports Update</div>
<div style="left:2235px;top:1166px;width:2px;height:34px;background:#c4c4c4"></div>
<div style="left:2335px;top:1166px;width:2px;height:34px;background:#c4c4c4"></div>
<div style="left:2391px;top:1166px;width:2px;height:34px;background:#c4c4c4"></div>
<div style="left:2491px;top:1166px;width:2px;height:34px;background:#c4c4c4"></div>
<div style="left:2591px;top:1166px;width:2px;height:34px;background:#c4c4c4"></div>
<svg style="left:2245px;top:1166px" width="34" height="33" viewBox="0 0 34 33"><rect x="1" y="1" width="10" height="15" fill="#f0901a" stroke="#111" stroke-width="1.5"/><path d="M15 4h8v6M19 12h-4v6h8" stroke="#111" stroke-width="2" fill="none"/><path d="M25 18l6 6-6 6-6-6z" fill="#f0901a" stroke="#8a4a00"/></svg>
<svg style="left:2290px;top:1168px" width="32" height="30" viewBox="0 0 32 30"><rect x="8" y="1" width="23" height="25" rx="2" fill="#c8d4ec" stroke="#7a8fba" stroke-width="1.5"/><path d="M1 13l6 13 8-24" stroke="#2a3a90" stroke-width="3" fill="none"/></svg>
<svg style="left:2346px;top:1166px" width="32" height="33" viewBox="0 0 32 33"><rect x="4" y="6" width="26" height="25" fill="#f4f4f4" stroke="#333" stroke-width="1.500"/><path d="M10 12h16M10 18h16M10 24h16" stroke="#6a7aa0" stroke-width="2" stroke-dasharray="4 2"/><path d="M2 6a5 5 0 1 1 6 5v5M8 22v3" stroke="#111" stroke-width="2.5" fill="none"/></svg>
<svg style="left:2402px;top:1167px" width="32" height="32" viewBox="0 0 32 32"><rect x="4" y="5" width="26" height="25" fill="#eee" stroke="#c4c4c4" stroke-width="1.500"/><path d="M9 20l6-6 6 6M8 12l8-10" stroke="#c0c0c0" stroke-width="2" fill="none"/></svg>
<svg style="left:2446px;top:1166px" width="33" height="33" viewBox="0 0 33 33"><rect x="1" y="1" width="19" height="25" fill="#eef2f8" stroke="#333" stroke-width="1.500"/><text x="4" y="14" font-size="13" font-weight="bold" font-family="Liberation Sans" fill="#222">S</text><rect x="22" y="3" width="10" height="28" fill="#eef2f8" stroke="#333" stroke-width="1.5"/><path d="M27 6v20" stroke="#4a7ac0" stroke-width="2" stroke-dasharray="2 2"/><path d="M6 28h14l-3-3" stroke="#2a6ad0" stroke-width="2" fill="none"/></svg>
<svg style="left:2502px;top:1166px" width="34" height="33" viewBox="0 0 34 33"><text x="0" y="32" font-family="Liberation Serif" font-weight="bold" font-size="34" fill="#111">A</text><path d="M22 7l5-6 5 6z" fill="#6a1010"/></svg>
<svg style="left:2547px;top:1166px" width="31" height="33" viewBox="0 0 31 33"><text x="1" y="31" font-family="Liberation Serif" font-weight="bold" font-size="20" fill="#111">A</text><path d="M18 2h12l-6 6z" fill="#6a1010"/></svg>
<svg style="left:2602px;top:1166px" width="34" height="33" viewBox="0 0 34 33"><rect x="4" y="12" width="28" height="20" fill="#f4f4f4" stroke="#333" stroke-width="1.500"/><path d="M8 18h20M8 24h20" stroke="#4a6ad0" stroke-width="2.5" stroke-dasharray="5 2"/><path d="M9 1l7 7-7 7-7-7z" fill="#f0a020" stroke="#6a3a00"/></svg>
<svg style="left:2645px;top:1166px" width="34" height="33" viewBox="0 0 34 33"><text x="1" y="13" font-family="Liberation Sans" font-weight="bold" font-size="13" fill="#2a3ab0">a.b.c</text><path d="M5 16v8h10M11 20l4 4-4 4" stroke="#111" stroke-width="2.5" fill="none"/><text x="22" y="31" font-family="Liberation Sans" font-weight="bold" font-size="13" fill="#2a3ab0">c</text></svg>
<svg style="left:2690px;top:1167px" width="34" height="32" viewBox="0 0 34 32"><path d="M2 10h9l2 3h15v17H2z" fill="#e8c060" stroke="#8a6a20" stroke-width="1.5"/><path d="M2 30l5-12h26l-5 12z" fill="#f8e090" stroke="#8a6a20" stroke-width="1.5"/><path d="M18 14a8 8 0 0 1 12-8" stroke="#111" stroke-width="2.5" fill="none"/><path d="M28 2l5 4-6 3z" fill="#111"/></svg>
<svg style="left:2735px;top:1166px" width="34" height="33" viewBox="0 0 34 33"><path d="M2 10h9l2 3h12v15H2z" fill="#f0d890" stroke="#8a7030" stroke-width="1.5"/><path d="M6 8l10-6 10 6" fill="#f8e090" stroke="#8a7030" stroke-width="1.5"/><rect x="16" y="12" width="16" height="20" fill="#a86a20" stroke="#5a3000" stroke-width="1.5"/><rect x="21" y="20" width="6" height="8" fill="#f0c050"/></svg>
<svg style="left:2786px;top:1174px" width="16" height="16" viewBox="0 0 16 16"><path d="M2 2l12 12M14 2L2 14" stroke="#222" stroke-width="2.5"/></svg>
<div style="left:992px;top:1218px;width:1817px;height:544px;border:2px solid #9a9a9a;background:#fff"></div>
<div style="left:994px;top:1220px;width:1813px;height:540px;border:5px solid #b3d7fb"></div>
<div style="left:999px;top:1225px;width:1803px;height:530px;border-top:2px solid #c8c8c8;border-left:2px solid #c8c8c8"></div>
<div class="t" style="left:1004px;top:1228.9px;font-size:20px;line-height:20px;color:#1c1cf0;letter-spacing:-1.135px;">SELECT</div>
<div class="t" style="left:1053px;top:1257.9px;font-size:20px;line-height:20px;color:#000;">*</div>
<div class="t" style="left:1028px;top:1276.9px;font-size:20px;line-height:20px;color:#1c1cf0;letter-spacing:-0.969px;">FROM</div>
<div class="t" style="left:1052px;top:1300.9px;font-size:20px;line-height:20px;color:#000;letter-spacing:-0.051px;">EU_Customers_EDL.CUSTOMER</div>
<div class="t" style="left:1004px;top:1324.9px;font-size:20px;line-height:20px;color:#1c1cf0;letter-spacing:0.280px;">UNION ALL</div>
<div class="t" style="left:1004px;top:1348.9px;font-size:20px;line-height:20px;color:#1c1cf0;letter-spacing:-1.135px;">SELECT</div>
<div class="t" style="left:1053px;top:1377.9px;font-size:20px;line-height:20px;color:#000;">*</div>
<div class="t" style="left:1028px;top:1396.9px;font-size:20px;line-height:20px;color:#1c1cf0;letter-spacing:-0.969px;">FROM</div>
<div class="t" style="left:1052px;top:1420.9px;font-size:20px;line-height:20px;color:#000;letter-spacing:-0.011px;">US_Customers_EDL.CUSTOMER</div>
<div style="left:1114px;top:328.5px;width:504px;height:503.5px;background:#fff"></div>
<div style="left:1117.5px;top:331.7px;width:500.5px;height:500.3px;background:#fdc975"></div>
<div style="left:1117.5px;top:331.7px;width:500.5px;height:77.3px;background:linear-gradient(#f8961e,#fdc46c)"></div>
<div style="left:1614px;top:328.5px;width:2px;height:503.5px;background:#999"></div>
<div style="left:1616px;top:328.5px;width:2px;height:505.5px;background:#000"></div>
<div style="left:1114px;top:830.7px;width:504px;height:1.5px;background:#a0a0a0"></div>
<div style="left:1114px;top:832px;width:504px;height:2px;background:#000"></div>
<div style="left:1117px;top:409px;width:498px;height:2px;background:#2a2e36"></div>
<div class="t" style="left:1329px;top:344.9px;font-size:21px;line-height:21px;color:#333;letter-spacing:0.417px;">&lt;&lt;Table&gt;&gt;</div>
<svg style="left:1299px;top:376px" width="24" height="24" viewBox="0 0 26 26"><rect x="5" y="2" width="16" height="22" fill="#f5f08a" stroke="#333" stroke-width="1.6"/><path d="M8 8h10M8 12h4M14 12h4M8 16h4M14 16h4M8 20h4" stroke="#333" stroke-width="1.6"/></svg>
<div class="t" style="left:1334px;top:377.4px;font-size:22px;line-height:22px;color:#000;font-weight:bold;letter-spacing:0.188px;">CUSTOMER</div>
<svg style="left:1140px;top:425px" width="22" height="22" viewBox="0 0 22 22"><rect x="0" y="0" width="22" height="22" fill="#8a8a8a"/><rect x="2" y="2" width="20" height="20" fill="#111"/><rect x="2" y="2" width="18" height="18" fill="#4a62ee"/><rect x="3" y="3" width="16" height="7" fill="#6a82f4"/><path d="M15.500 7.500a5 5 0 1 0 0 7" stroke="#fff" stroke-width="2.600" fill="none"/></svg>
<div class="t" style="left:1174px;top:425.4px;font-size:22px;line-height:22px;color:#000;letter-spacing:0.396px;">CUSTOMERID : CustomerID(12)</div>
<svg style="left:1140px;top:455px" width="22" height="22" viewBox="0 0 22 22"><rect x="0" y="0" width="22" height="22" fill="#8a8a8a"/><rect x="2" y="2" width="20" height="20" fill="#111"/><rect x="2" y="2" width="18" height="18" fill="#4a62ee"/><rect x="3" y="3" width="16" height="7" fill="#6a82f4"/><path d="M15.500 7.500a5 5 0 1 0 0 7" stroke="#fff" stroke-width="2.600" fill="none"/></svg>
<div class="t" style="left:1174px;top:455.4px;font-size:22px;line-height:22px;color:#000;letter-spacing:0.359px;">FIRSTNAME : FirstName(25)</div>
<svg style="left:1140px;top:485px" width="22" height="22" viewBox="0 0 22 22"><rect x="0" y="0" width="22" height="22" fill="#8a8a8a"/><rect x="2" y="2" width="20" height="20" fill="#111"/><rect x="2" y="2" width="18" height="18" fill="#4a62ee"/><rect x="3" y="3" width="16" height="7" fill="#6a82f4"/><path d="M15.500 7.500a5 5 0 1 0 0 7" stroke="#fff" stroke-width="2.600" fill="none"/></svg>
<div class="t" style="left:1174px;top:485.4px;font-size:22px;line-height:22px;color:#000;letter-spacing:0.509px;">LASTNAME : LastName(25)</div>
<svg style="left:1140px;top:515px" width="22" height="22" viewBox="0 0 22 22"><rect x="0" y="0" width="22" height="22" fill="#8a8a8a"/><rect x="2" y="2" width="20" height="20" fill="#111"/><rect x="2" y="2" width="18" height="18" fill="#4a62ee"/><rect x="3" y="3" width="16" height="7" fill="#6a82f4"/><path d="M15.500 7.500a5 5 0 1 0 0 7" stroke="#fff" stroke-width="2.600" fill="none"/></svg>
<div class="t" style="left:1174px;top:515.4px;font-size:22px;line-height:22px;color:#000;letter-spacing:0.523px;">MIDDLENAME : MiddleInitial(15)</div>
<svg style="left:1140px;top:545px" width="22" height="22" viewBox="0 0 22 22"><rect x="0" y="0" width="22" height="22" fill="#8a8a8a"/><rect x="2" y="2" width="20" height="20" fill="#111"/><rect x="2" y="2" width="18" height="18" fill="#4a62ee"/><rect x="3" y="3" width="16" height="7" fill="#6a82f4"/><path d="M15.500 7.500a5 5 0 1 0 0 7" stroke="#fff" stroke-width="2.600" fill="none"/></svg>
<div class="t" style="left:1174px;top:545.4px;font-size:22px;line-height:22px;color:#000;letter-spacing:0.250px;">STREETADDRESS : StreetAddress(50)</div>
<svg style="left:1140px;top:575px" width="22" height="22" viewBox="0 0 22 22"><rect x="0" y="0" width="22" height="22" fill="#8a8a8a"/><rect x="2" y="2" width="20" height="20" fill="#111"/><rect x="2" y="2" width="18" height="18" fill="#4a62ee"/><rect x="3" y="3" width="16" height="7" fill="#6a82f4"/><path d="M15.500 7.500a5 5 0 1 0 0 7" stroke="#fff" stroke-width="2.600" fill="none"/></svg>
<div class="t" style="left:1174px;top:575.4px;font-size:22px;line-height:22px;color:#000;letter-spacing:0.327px;">STREETADDRESS2 : StreetAddress(50)</div>
<svg style="left:1140px;top:605px" width="22" height="22" viewBox="0 0 22 22"><rect x="0" y="0" width="22" height="22" fill="#8a8a8a"/><rect x="2" y="2" width="20" height="20" fill="#111"/><rect x="2" y="2" width="18" height="18" fill="#4a62ee"/><rect x="3" y="3" width="16" height="7" fill="#6a82f4"/><path d="M15.500 7.500a5 5 0 1 0 0 7" stroke="#fff" stroke-width="2.600" fill="none"/></svg>
<div class="t" style="left:1174px;top:605.4px;font-size:22px;line-height:22px;color:#000;letter-spacing:0.662px;">CITY : City(25)</div>
<svg style="left:1140px;top:635px" width="22" height="22" viewBox="0 0 22 22"><rect x="0" y="0" width="22" height="22" fill="#8a8a8a"/><rect x="2" y="2" width="20" height="20" fill="#111"/><rect x="2" y="2" width="18" height="18" fill="#4a62ee"/><rect x="3" y="3" width="16" height="7" fill="#6a82f4"/><path d="M15.500 7.500a5 5 0 1 0 0 7" stroke="#fff" stroke-width="2.600" fill="none"/></svg>
<div class="t" style="left:1174px;top:635.4px;font-size:22px;line-height:22px;color:#000;letter-spacing:0.304px;">STATEPROVINCE : StateProvince(25)</div>
<svg style="left:1140px;top:665px" width="22" height="22" viewBox="0 0 22 22"><rect x="0" y="0" width="22" height="22" fill="#8a8a8a"/><rect x="2" y="2" width="20" height="20" fill="#111"/><rect x="2" y="2" width="18" height="18" fill="#4a62ee"/><rect x="3" y="3" width="16" height="7" fill="#6a82f4"/><path d="M15.500 7.500a5 5 0 1 0 0 7" stroke="#fff" stroke-width="2.600" fill="none"/></svg>
<div class="t" style="left:1174px;top:665.4px;font-size:22px;line-height:22px;color:#000;letter-spacing:0.336px;">POSTALCODE : PostalCode(15)</div>
<svg style="left:1140px;top:695px" width="22" height="22" viewBox="0 0 22 22"><rect x="0" y="0" width="22" height="22" fill="#8a8a8a"/><rect x="2" y="2" width="20" height="20" fill="#111"/><rect x="2" y="2" width="18" height="18" fill="#4a62ee"/><rect x="3" y="3" width="16" height="7" fill="#6a82f4"/><path d="M15.500 7.500a5 5 0 1 0 0 7" stroke="#fff" stroke-width="2.600" fill="none"/></svg>
<div class="t" style="left:1174px;top:695.4px;font-size:22px;line-height:22px;color:#000;letter-spacing:0.596px;">COUNTRY : Country(10)</div>
<svg style="left:1140px;top:725px" width="22" height="22" viewBox="0 0 22 22"><rect x="0" y="0" width="22" height="22" fill="#8a8a8a"/><rect x="2" y="2" width="20" height="20" fill="#111"/><rect x="2" y="2" width="18" height="18" fill="#4a62ee"/><rect x="3" y="3" width="16" height="7" fill="#6a82f4"/><path d="M15.500 7.500a5 5 0 1 0 0 7" stroke="#fff" stroke-width="2.600" fill="none"/></svg>
<div class="t" style="left:1174px;top:725.4px;font-size:22px;line-height:22px;color:#000;letter-spacing:0.418px;">PHONENUMBER : PhoneNumber(30)</div>
<div style="left:1117px;top:763px;width:498px;height:2px;background:#2a2e36"></div>
<svg style="left:1140px;top:779px" width="22" height="22" viewBox="0 0 22 22"><rect x="0" y="0" width="22" height="22" fill="#8a8a8a"/><rect x="2" y="2" width="20" height="20" fill="#222"/><rect x="2" y="2" width="18" height="18" fill="#f4f232"/><path d="M7 17V5h5a3.500 3.500 0 0 1 0 7H7" stroke="#111" stroke-width="2.500" fill="none"/></svg>
<div class="t" style="left:1174px;top:779.4px;font-size:22px;line-height:22px;color:#000;letter-spacing:-0.206px;">CONSTRAINT_5</div>
<div style="left:1117px;top:819px;width:498px;height:2px;background:#2a2e36"></div>
<div style="left:1738px;top:328.5px;width:503px;height:533.5px;background:#fff"></div>
<div style="left:1741.5px;top:331.7px;width:499.5px;height:530.3px;background:#fdc975"></div>
<div style="left:1741.5px;top:331.7px;width:499.5px;height:107.3px;background:linear-gradient(#f8961e,#fdc46c)"></div>
<div style="left:2237px;top:328.5px;width:2px;height:533.5px;background:#999"></div>
<div style="left:2239px;top:328.5px;width:2px;height:535.5px;background:#000"></div>
<div style="left:1738px;top:860.7px;width:503px;height:1.5px;background:#a0a0a0"></div>
<div style="left:1738px;top:862px;width:503px;height:2px;background:#000"></div>
<div style="left:1741px;top:439px;width:497px;height:2px;background:#2a2e36"></div>
<div class="t" style="left:1953px;top:344.9px;font-size:21px;line-height:21px;color:#333;letter-spacing:0.417px;">&lt;&lt;Table&gt;&gt;</div>
<svg style="left:1923px;top:376px" width="24" height="24" viewBox="0 0 26 26"><rect x="5" y="2" width="16" height="22" fill="#f5f08a" stroke="#333" stroke-width="1.6"/><path d="M8 8h10M8 12h4M14 12h4M8 16h4M14 16h4M8 20h4" stroke="#333" stroke-width="1.6"/></svg>
<div class="t" style="left:1958px;top:377.4px;font-size:22px;line-height:22px;color:#000;font-weight:bold;letter-spacing:0.188px;">CUSTOMER</div>
<div class="t" style="left:1910px;top:406.9px;font-size:21px;line-height:21px;color:#444;letter-spacing:-0.680px;">EU_Customers_EDL</div>
<svg style="left:1765px;top:455px" width="22" height="22" viewBox="0 0 22 22"><rect x="0" y="0" width="22" height="22" fill="#8a8a8a"/><rect x="2" y="2" width="20" height="20" fill="#111"/><rect x="2" y="2" width="18" height="18" fill="#4a62ee"/><rect x="3" y="3" width="16" height="7" fill="#6a82f4"/><path d="M15.500 7.500a5 5 0 1 0 0 7" stroke="#fff" stroke-width="2.600" fill="none"/></svg>
<div class="t" style="left:1799px;top:455.4px;font-size:22px;line-height:22px;color:#000;letter-spacing:0.396px;">CUSTOMERID : CustomerID(12)</div>
<svg style="left:1765px;top:485px" width="22" height="22" viewBox="0 0 22 22"><rect x="0" y="0" width="22" height="22" fill="#8a8a8a"/><rect x="2" y="2" width="20" height="20" fill="#111"/><rect x="2" y="2" width="18" height="18" fill="#4a62ee"/><rect x="3" y="3" width="16" height="7" fill="#6a82f4"/><path d="M15.500 7.500a5 5 0 1 0 0 7" stroke="#fff" stroke-width="2.600" fill="none"/></svg>
<div class="t" style="left:1799px;top:485.4px;font-size:22px;line-height:22px;color:#000;letter-spacing:0.359px;">FIRSTNAME : FirstName(25)</div>
<svg style="left:1765px;top:515px" width="22" height="22" viewBox="0 0 22 22"><rect x="0" y="0" width="22" height="22" fill="#8a8a8a"/><rect x="2" y="2" width="20" height="20" fill="#111"/><rect x="2" y="2" width="18" height="18" fill="#4a62ee"/><rect x="3" y="3" width="16" height="7" fill="#6a82f4"/><path d="M15.500 7.500a5 5 0 1 0 0 7" stroke="#fff" stroke-width="2.600" fill="none"/></svg>
<div class="t" style="left:1799px;top:515.4px;font-size:22px;line-height:22px;color:#000;letter-spacing:0.509px;">LASTNAME : LastName(25)</div>
<svg style="left:1765px;top:545px" width="22" height="22" viewBox="0 0 22 22"><rect x="0" y="0" width="22" height="22" fill="#8a8a8a"/><rect x="2" y="2" width="20" height="20" fill="#111"/><rect x="2" y="2" width="18" height="18" fill="#4a62ee"/><rect x="3" y="3" width="16" height="7" fill="#6a82f4"/><path d="M15.500 7.500a5 5 0 1 0 0 7" stroke="#fff" stroke-width="2.600" fill="none"/></svg>
<div class="t" style="left:1799px;top:545.4px;font-size:22px;line-height:22px;color:#000;letter-spacing:0.523px;">MIDDLENAME : MiddleInitial(15)</div>
<svg style="left:1765px;top:575px" width="22" height="22" viewBox="0 0 22 22"><rect x="0" y="0" width="22" height="22" fill="#8a8a8a"/><rect x="2" y="2" width="20" height="20" fill="#111"/><rect x="2" y="2" width="18" height="18" fill="#4a62ee"/><rect x="3" y="3" width="16" height="7" fill="#6a82f4"/><path d="M15.500 7.500a5 5 0 1 0 0 7" stroke="#fff" stroke-width="2.600" fill="none"/></svg>
<div class="t" style="left:1799px;top:575.4px;font-size:22px;line-height:22px;color:#000;letter-spacing:0.250px;">STREETADDRESS : StreetAddress(50)</div>
<svg style="left:1765px;top:605px" width="22" height="22" viewBox="0 0 22 22"><rect x="0" y="0" width="22" height="22" fill="#8a8a8a"/><rect x="2" y="2" width="20" height="20" fill="#111"/><rect x="2" y="2" width="18" height="18" fill="#4a62ee"/><rect x="3" y="3" width="16" height="7" fill="#6a82f4"/><path d="M15.500 7.500a5 5 0 1 0 0 7" stroke="#fff" stroke-width="2.600" fill="none"/></svg>
<div class="t" style="left:1799px;top:605.4px;font-size:22px;line-height:22px;color:#000;letter-spacing:0.327px;">STREETADDRESS2 : StreetAddress(50)</div>
<svg style="left:1765px;top:635px" width="22" height="22" viewBox="0 0 22 22"><rect x="0" y="0" width="22" height="22" fill="#8a8a8a"/><rect x="2" y="2" width="20" height="20" fill="#111"/><rect x="2" y="2" width="18" height="18" fill="#4a62ee"/><rect x="3" y="3" width="16" height="7" fill="#6a82f4"/><path d="M15.500 7.500a5 5 0 1 0 0 7" stroke="#fff" stroke-width="2.600" fill="none"/></svg>
<div class="t" style="left:1799px;top:635.4px;font-size:22px;line-height:22px;color:#000;letter-spacing:0.662px;">CITY : City(25)</div>
<svg style="left:1765px;top:665px" width="22" height="22" viewBox="0 0 22 22"><rect x="0" y="0" width="22" height="22" fill="#8a8a8a"/><rect x="2" y="2" width="20" height="20" fill="#111"/><rect x="2" y="2" width="18" height="18" fill="#4a62ee"/><rect x="3" y="3" width="16" height="7" fill="#6a82f4"/><path d="M15.500 7.500a5 5 0 1 0 0 7" stroke="#fff" stroke-width="2.600" fill="none"/></svg>
<div class="t" style="left:1799px;top:665.4px;font-size:22px;line-height:22px;color:#000;letter-spacing:0.304px;">STATEPROVINCE : StateProvince(25)</div>
<svg style="left:1765px;top:695px" width="22" height="22" viewBox="0 0 22 22"><rect x="0" y="0" width="22" height="22" fill="#8a8a8a"/><rect x="2" y="2" width="20" height="20" fill="#111"/><rect x="2" y="2" width="18" height="18" fill="#4a62ee"/><rect x="3" y="3" width="16" height="7" fill="#6a82f4"/><path d="M15.500 7.500a5 5 0 1 0 0 7" stroke="#fff" stroke-width="2.600" fill="none"/></svg>
<div class="t" style="left:1799px;top:695.4px;font-size:22px;line-height:22px;color:#000;letter-spacing:0.336px;">POSTALCODE : PostalCode(15)</div>
<svg style="left:1765px;top:725px" width="22" height="22" viewBox="0 0 22 22"><rect x="0" y="0" width="22" height="22" fill="#8a8a8a"/><rect x="2" y="2" width="20" height="20" fill="#111"/><rect x="2" y="2" width="18" height="18" fill="#4a62ee"/><rect x="3" y="3" width="16" height="7" fill="#6a82f4"/><path d="M15.500 7.500a5 5 0 1 0 0 7" stroke="#fff" stroke-width="2.600" fill="none"/></svg>
<div class="t" style="left:1799px;top:725.4px;font-size:22px;line-height:22px;color:#000;letter-spacing:0.596px;">COUNTRY : Country(10)</div>
<svg style="left:1765px;top:755px" width="22" height="22" viewBox="0 0 22 22"><rect x="0" y="0" width="22" height="22" fill="#8a8a8a"/><rect x="2" y="2" width="20" height="20" fill="#111"/><rect x="2" y="2" width="18" height="18" fill="#4a62ee"/><rect x="3" y="3" width="16" height="7" fill="#6a82f4"/><path d="M15.500 7.500a5 5 0 1 0 0 7" stroke="#fff" stroke-width="2.600" fill="none"/></svg>
<div class="t" style="left:1799px;top:755.4px;font-size:22px;line-height:22px;color:#000;letter-spacing:0.418px;">PHONENUMBER : PhoneNumber(30)</div>
<div style="left:1741px;top:793px;width:497px;height:2px;background:#2a2e36"></div>
<svg style="left:1765px;top:809px" width="22" height="22" viewBox="0 0 22 22"><rect x="0" y="0" width="22" height="22" fill="#8a8a8a"/><rect x="2" y="2" width="20" height="20" fill="#222"/><rect x="2" y="2" width="18" height="18" fill="#f4f232"/><path d="M7 17V5h5a3.500 3.500 0 0 1 0 7H7" stroke="#111" stroke-width="2.500" fill="none"/></svg>
<div class="t" style="left:1799px;top:809.4px;font-size:22px;line-height:22px;color:#000;letter-spacing:-0.206px;">CONSTRAINT_5</div>
<div style="left:1741px;top:849px;width:497px;height:2px;background:#2a2e36"></div>
<div style="left:2283px;top:328.5px;width:502px;height:533.5px;background:#fff"></div>
<div style="left:2286.5px;top:331.7px;width:498.5px;height:530.3px;background:#fdc975"></div>
<div style="left:2286.5px;top:331.7px;width:498.5px;height:107.3px;background:linear-gradient(#f8961e,#fdc46c)"></div>
<div style="left:2781px;top:328.5px;width:2px;height:533.5px;background:#999"></div>
<div style="left:2783px;top:328.5px;width:2px;height:535.5px;background:#000"></div>
<div style="left:2283px;top:860.7px;width:502px;height:1.5px;background:#a0a0a0"></div>
<div style="left:2283px;top:862px;width:502px;height:2px;background:#000"></div>
<div style="left:2286px;top:439px;width:496px;height:2px;background:#2a2e36"></div>
<div class="t" style="left:2497px;top:344.9px;font-size:21px;line-height:21px;color:#333;letter-spacing:0.417px;">&lt;&lt;Table&gt;&gt;</div>
<svg style="left:2467px;top:376px" width="24" height="24" viewBox="0 0 26 26"><rect x="5" y="2" width="16" height="22" fill="#f5f08a" stroke="#333" stroke-width="1.6"/><path d="M8 8h10M8 12h4M14 12h4M8 16h4M14 16h4M8 20h4" stroke="#333" stroke-width="1.6"/></svg>
<div class="t" style="left:2502px;top:377.4px;font-size:22px;line-height:22px;color:#000;font-weight:bold;letter-spacing:0.188px;">CUSTOMER</div>
<div class="t" style="left:2455px;top:406.9px;font-size:21px;line-height:21px;color:#444;letter-spacing:-0.680px;">US_Customers_EDL</div>
<svg style="left:2308px;top:455px" width="22" height="22" viewBox="0 0 22 22"><rect x="0" y="0" width="22" height="22" fill="#8a8a8a"/><rect x="2" y="2" width="20" height="20" fill="#111"/><rect x="2" y="2" width="18" height="18" fill="#4a62ee"/><rect x="3" y="3" width="16" height="7" fill="#6a82f4"/><path d="M15.500 7.500a5 5 0 1 0 0 7" stroke="#fff" stroke-width="2.600" fill="none"/></svg>
<div class="t" style="left:2342px;top:455.4px;font-size:22px;line-height:22px;color:#000;letter-spacing:0.396px;">CUSTOMERID : CustomerID(12)</div>
<svg style="left:2308px;top:485px" width="22" height="22" viewBox="0 0 22 22"><rect x="0" y="0" width="22" height="22" fill="#8a8a8a"/><rect x="2" y="2" width="20" height="20" fill="#111"/><rect x="2" y="2" width="18" height="18" fill="#4a62ee"/><rect x="3" y="3" width="16" height="7" fill="#6a82f4"/><path d="M15.500 7.500a5 5 0 1 0 0 7" stroke="#fff" stroke-width="2.600" fill="none"/></svg>
<div class="t" style="left:2342px;top:485.4px;font-size:22px;line-height:22px;color:#000;letter-spacing:0.359px;">FIRSTNAME : FirstName(25)</div>
<svg style="left:2308px;top:515px" width="22" height="22" viewBox="0 0 22 22"><rect x="0" y="0" width="22" height="22" fill="#8a8a8a"/><rect x="2" y="2" width="20" height="20" fill="#111"/><rect x="2" y="2" width="18" height="18" fill="#4a62ee"/><rect x="3" y="3" width="16" height="7" fill="#6a82f4"/><path d="M15.500 7.500a5 5 0 1 0 0 7" stroke="#fff" stroke-width="2.600" fill="none"/></svg>
<div class="t" style="left:2342px;top:515.4px;font-size:22px;line-height:22px;color:#000;letter-spacing:0.509px;">LASTNAME : LastName(25)</div>
<svg style="left:2308px;top:545px" width="22" height="22" viewBox="0 0 22 22"><rect x="0" y="0" width="22" height="22" fill="#8a8a8a"/><rect x="2" y="2" width="20" height="20" fill="#111"/><rect x="2" y="2" width="18" height="18" fill="#4a62ee"/><rect x="3" y="3" width="16" height="7" fill="#6a82f4"/><path d="M15.500 7.500a5 5 0 1 0 0 7" stroke="#fff" stroke-width="2.600" fill="none"/></svg>
<div class="t" style="left:2342px;top:545.4px;font-size:22px;line-height:22px;color:#000;letter-spacing:0.523px;">MIDDLENAME : MiddleInitial(15)</div>
<svg style="left:2308px;top:575px" width="22" height="22" viewBox="0 0 22 22"><rect x="0" y="0" width="22" height="22" fill="#8a8a8a"/><rect x="2" y="2" width="20" height="20" fill="#111"/><rect x="2" y="2" width="18" height="18" fill="#4a62ee"/><rect x="3" y="3" width="16" height="7" fill="#6a82f4"/><path d="M15.500 7.500a5 5 0 1 0 0 7" stroke="#fff" stroke-width="2.600" fill="none"/></svg>
<div class="t" style="left:2342px;top:575.4px;font-size:22px;line-height:22px;color:#000;letter-spacing:0.250px;">STREETADDRESS : StreetAddress(50)</div>
<svg style="left:2308px;top:605px" width="22" height="22" viewBox="0 0 22 22"><rect x="0" y="0" width="22" height="22" fill="#8a8a8a"/><rect x="2" y="2" width="20" height="20" fill="#111"/><rect x="2" y="2" width="18" height="18" fill="#4a62ee"/><rect x="3" y="3" width="16" height="7" fill="#6a82f4"/><path d="M15.500 7.500a5 5 0 1 0 0 7" stroke="#fff" stroke-width="2.600" fill="none"/></svg>
<div class="t" style="left:2342px;top:605.4px;font-size:22px;line-height:22px;color:#000;letter-spacing:0.327px;">STREETADDRESS2 : StreetAddress(50)</div>
<svg style="left:2308px;top:635px" width="22" height="22" viewBox="0 0 22 22"><rect x="0" y="0" width="22" height="22" fill="#8a8a8a"/><rect x="2" y="2" width="20" height="20" fill="#111"/><rect x="2" y="2" width="18" height="18" fill="#4a62ee"/><rect x="3" y="3" width="16" height="7" fill="#6a82f4"/><path d="M15.500 7.500a5 5 0 1 0 0 7" stroke="#fff" stroke-width="2.600" fill="none"/></svg>
<div class="t" style="left:2342px;top:635.4px;font-size:22px;line-height:22px;color:#000;letter-spacing:0.662px;">CITY : City(25)</div>
<svg style="left:2308px;top:665px" width="22" height="22" viewBox="0 0 22 22"><rect x="0" y="0" width="22" height="22" fill="#8a8a8a"/><rect x="2" y="2" width="20" height="20" fill="#111"/><rect x="2" y="2" width="18" height="18" fill="#4a62ee"/><rect x="3" y="3" width="16" height="7" fill="#6a82f4"/><path d="M15.500 7.500a5 5 0 1 0 0 7" stroke="#fff" stroke-width="2.600" fill="none"/></svg>
<div class="t" style="left:2342px;top:665.4px;font-size:22px;line-height:22px;color:#000;letter-spacing:0.304px;">STATEPROVINCE : StateProvince(25)</div>
<svg style="left:2308px;top:695px" width="22" height="22" viewBox="0 0 22 22"><rect x="0" y="0" width="22" height="22" fill="#8a8a8a"/><rect x="2" y="2" width="20" height="20" fill="#111"/><rect x="2" y="2" width="18" height="18" fill="#4a62ee"/><rect x="3" y="3" width="16" height="7" fill="#6a82f4"/><path d="M15.500 7.500a5 5 0 1 0 0 7" stroke="#fff" stroke-width="2.600" fill="none"/></svg>
<div class="t" style="left:2342px;top:695.4px;font-size:22px;line-height:22px;color:#000;letter-spacing:0.336px;">POSTALCODE : PostalCode(15)</div>
<svg style="left:2308px;top:725px" width="22" height="22" viewBox="0 0 22 22"><rect x="0" y="0" width="22" height="22" fill="#8a8a8a"/><rect x="2" y="2" width="20" height="20" fill="#111"/><rect x="2" y="2" width="18" height="18" fill="#4a62ee"/><rect x="3" y="3" width="16" height="7" fill="#6a82f4"/><path d="M15.500 7.500a5 5 0 1 0 0 7" stroke="#fff" stroke-width="2.600" fill="none"/></svg>
<div class="t" style="left:2342px;top:725.4px;font-size:22px;line-height:22px;color:#000;letter-spacing:0.596px;">COUNTRY : Country(10)</div>
<svg style="left:2308px;top:755px" width="22" height="22" viewBox="0 0 22 22"><rect x="0" y="0" width="22" height="22" fill="#8a8a8a"/><rect x="2" y="2" width="20" height="20" fill="#111"/><rect x="2" y="2" width="18" height="18" fill="#4a62ee"/><rect x="3" y="3" width="16" height="7" fill="#6a82f4"/><path d="M15.500 7.500a5 5 0 1 0 0 7" stroke="#fff" stroke-width="2.600" fill="none"/></svg>
<div class="t" style="left:2342px;top:755.4px;font-size:22px;line-height:22px;color:#000;letter-spacing:0.418px;">PHONENUMBER : PhoneNumber(30)</div>
<div style="left:2286px;top:793px;width:496px;height:2px;background:#2a2e36"></div>
<svg style="left:2308px;top:809px" width="22" height="22" viewBox="0 0 22 22"><rect x="0" y="0" width="22" height="22" fill="#8a8a8a"/><rect x="2" y="2" width="20" height="20" fill="#222"/><rect x="2" y="2" width="18" height="18" fill="#f4f232"/><path d="M7 17V5h5a3.500 3.500 0 0 1 0 7H7" stroke="#111" stroke-width="2.500" fill="none"/></svg>
<div class="t" style="left:2342px;top:809.4px;font-size:22px;line-height:22px;color:#000;letter-spacing:-0.206px;">CONSTRAINT_5</div>
<div style="left:2286px;top:849px;width:496px;height:2px;background:#2a2e36"></div>
<svg style="left:1636px;top:327px" width="84" height="123" viewBox="0 0 84 123"><defs><linearGradient id="tg" x1="0" y1="0" x2="1" y2="1"><stop offset="0" stop-color="#fbe89a"/><stop offset="1" stop-color="#c8a050"/></linearGradient></defs>
<path d="M2 61L56 1.500V30H82V93H56V121z" fill="#e6c676"/>
<path d="M2 61L56 1.500V30H82" stroke="#fff29a" stroke-width="3" fill="none"/>
<path d="M82 30V93H56V121L2 61" stroke="#8a6a2a" stroke-width="3" fill="none"/>
<path d="M38 47h22v7h-7v20h-8V54h-7z" fill="#3a2a2a"/><text x="57" y="77" font-size="13" font-family="Liberation Sans" fill="#222">u</text></svg>
<div style="left:1637px;top:327px;width:82px;height:121px;border:1.5px solid #000"></div>
<div style="left:1632px;top:322px;width:12px;height:12px;background:#000;border:2px solid #fff"></div>
<div style="left:1632px;top:442px;width:12px;height:12px;background:#000;border:2px solid #fff"></div>
<div style="left:1712px;top:322px;width:12px;height:12px;background:#000;border:2px solid #fff"></div>
<div style="left:1712px;top:442px;width:12px;height:12px;background:#000;border:2px solid #fff"></div>
<div style="left:2837px;top:161px;width:172px;height:49px;background:linear-gradient(#dcdfe8,#f2f3f7 70%,#fdfdfd);border-radius:12px 12px 0 0;border:1px solid #d0d4de;border-bottom:none"></div>
<svg style="left:2846px;top:172px" width="32" height="32" viewBox="0 0 32 32"><path d="M4 8c4-6 14-7 20-4l6 4v10H8z" fill="#d8dce8" stroke="#6a7080"/><path d="M18 6h10v24h-6z" fill="#2a3a6a"/><path d="M6 18h14v12H6z" fill="#e8b830" stroke="#7a5a10"/></svg>
<div class="t" style="left:2886px;top:176.9px;font-size:23px;line-height:23px;color:#000;letter-spacing:-0.148px;">Guides</div>
<svg style="left:2974px;top:178px" width="21" height="21" viewBox="0 0 22 22"><path d="M4 4l14 14M18 4L4 18" stroke="#111" stroke-width="6.500" stroke-linecap="square"/><path d="M4 4l14 14M18 4L4 18" stroke="#fff" stroke-width="3" stroke-linecap="square"/></svg>
<div style="left:3743px;top:176px;width:21px;height:8px;border:2px solid #111"></div>
<div style="left:3787px;top:176px;width:21px;height:20px;border:2px solid #111"></div>
<div style="left:3789px;top:180px;width:17px;height:1.5px;background:#111"></div>
<div class="t" style="left:2859px;top:233.5px;font-size:30px;line-height:30px;color:#4d5b6b;font-weight:bold;letter-spacing:-0.203px;">Modeling Actions...</div>
<svg style="left:3146px;top:241px" width="18" height="12" viewBox="0 0 18 12"><path d="M1 1h16L9 11z" fill="#4d5b6b"/></svg>
<div style="left:2852px;top:286px;width:967px;height:57px;background:linear-gradient(rgba(225,236,249,1),rgba(255,255,255,0));border-radius:7px 7px 0 0"></div>
<div style="left:2852px;top:286px;width:967px;height:57px;border-radius:7px 7px 0 0;border:2px solid #b3cff0;border-bottom:none;-webkit-mask-image:linear-gradient(#000 20%,transparent);mask-image:linear-gradient(#000 20%,transparent)"></div>
<svg style="left:2866px;top:302px" width="18" height="12" viewBox="0 0 18 12"><path d="M1 1h16L9 11z" fill="#5a6a80"/></svg>
<div class="t" style="left:2899px;top:300.9px;font-size:23px;line-height:23px;color:#101a6e;font-weight:bold;letter-spacing:0.043px;">Action Sets</div>
<div style="left:3613px;top:293px;width:196px;height:27px;background:#fff"></div>
<div class="t" style="left:3617px;top:297.9px;font-size:23px;line-height:23px;color:#000;letter-spacing:0.336px;text-decoration:underline;text-underline-offset:3px">Go to examples...</div>
<div class="t" style="left:2869px;top:345.9px;font-size:23px;line-height:23px;color:#000;letter-spacing:0.435px;text-decoration:underline;text-underline-offset:3px">Execute selected action</div>
<div style="left:2873px;top:383px;width:926px;height:34px;background:#fff;border:1px solid #c8c8c8;border-radius:5px;box-shadow:0 1px 1px #bbb"></div>
<div style="left:3770px;top:383px;width:29px;height:34px;background:linear-gradient(#6aaef8,#2d84f0);border-radius:0 5px 5px 0"></div>
<svg style="left:3776px;top:389px" width="17" height="22" viewBox="0 0 17 22"><path d="M3 8l5.500-5 5.500 5M3 14l5.500 5 5.500-5" stroke="#fff" stroke-width="2.200" fill="none"/></svg>
<div class="t" style="left:2889px;top:388.9px;font-size:23px;line-height:23px;color:#000;letter-spacing:0.165px;">Model Teiid Data Source</div>
<div style="left:2867px;top:435px;width:938px;height:392px;background:#fff;border:2px solid #bdbdbd"></div>
<div style="left:2869px;top:572px;width:935px;height:32px;background:#dcdcdc"></div>
<div class="t" style="left:2942px;top:440.9px;font-size:23px;line-height:23px;color:#000;letter-spacing:0.308px;">Define Teiid Model Project &gt;&gt;</div>
<div class="t" style="left:3279px;top:440.9px;font-size:23px;line-height:23px;color:#000;letter-spacing:0.277px;">&lt;undefined&gt;</div>
<div class="t" style="left:2942px;top:474.9px;font-size:23px;line-height:23px;color:#000;letter-spacing:-0.045px;">Create Data Source</div>
<div class="t" style="left:2942px;top:508.9px;font-size:23px;line-height:23px;color:#000;letter-spacing:0.232px;">Create source model from Teiid data source DDL &gt;&gt;</div>
<div class="t" style="left:3514px;top:508.9px;font-size:23px;line-height:23px;color:#000;letter-spacing:0.277px;">&lt;undefined&gt;</div>
<div class="t" style="left:2942px;top:542.9px;font-size:23px;line-height:23px;color:#000;letter-spacing:0.193px;">Set Connection Profile &gt;&gt;</div>
<div class="t" style="left:3238px;top:542.9px;font-size:23px;line-height:23px;color:#000;letter-spacing:0.277px;">&lt;undefined&gt;</div>
<div class="t" style="left:2942px;top:576.9px;font-size:23px;line-height:23px;color:#000;letter-spacing:-0.071px;">Preview Data &gt;&gt;</div>
<div class="t" style="left:3140px;top:576.9px;font-size:23px;line-height:23px;color:#000;letter-spacing:0.277px;">&lt;undefined&gt;</div>
<div class="t" style="left:2942px;top:610.9px;font-size:23px;line-height:23px;color:#000;letter-spacing:-0.112px;">Define VDB &gt;&gt;</div>
<div class="t" style="left:3124px;top:610.9px;font-size:23px;line-height:23px;color:#000;letter-spacing:0.277px;">&lt;undefined&gt;</div>
<div class="t" style="left:2942px;top:644.9px;font-size:23px;line-height:23px;color:#000;letter-spacing:-0.220px;">Execute VDB &gt;&gt;</div>
<div class="t" style="left:3139px;top:644.9px;font-size:23px;line-height:23px;color:#000;letter-spacing:0.277px;">&lt;undefined&gt;</div>
<svg style="left:2905px;top:436px" width="32" height="32" viewBox="0 0 32 32"><path d="M2 18h24l-2 12H4z" fill="#3aa0d8" stroke="#1a5a90"/><path d="M4 18l4-6h10l2 6" fill="#c8d8e8" stroke="#556"/><path d="M16 16l14-14" stroke="#222" stroke-width="2.500"/><path d="M26 1l5 1-1 5" fill="#f0e060"/></svg>
<svg style="left:2909px;top:470px" width="28" height="32" viewBox="0 0 28 32"><rect x="3" y="2" width="18" height="26" rx="6" fill="#c8d4e4" stroke="#7a8aa8" stroke-width="1.500"/><path d="M20 30l8-8v8z" fill="#1a3ad0"/></svg>
<svg style="left:2905px;top:503px" width="32" height="34" viewBox="0 0 32 34"><path d="M4 10c4-8 16-9 24-4v20H8z" fill="#c0c8d8" stroke="#5a6a8a"/><rect x="12" y="10" width="16" height="18" fill="#a8b8e0" stroke="#5a6a8a"/><path d="M2 32l10-10M6 22h6v6" stroke="#111" stroke-width="3" fill="none"/></svg>
<svg style="left:2905px;top:539px" width="32" height="30" viewBox="0 0 32 30"><path d="M1 12h14l6-8 8 6-4 12H10l-9-3z" fill="#e8b830" stroke="#7a5a10" stroke-width="1.5"/><circle cx="20" cy="14" r="6" fill="none" stroke="#7a5a10" stroke-width="2"/></svg>
<svg style="left:2905px;top:572px" width="32" height="32" viewBox="0 0 32 32"><rect x="1" y="1" width="28" height="28" fill="#e0e8f4" stroke="#1a2a6a" stroke-width="2"/><rect x="1" y="1" width="28" height="6" fill="#3a6ac0"/><path d="M10 28l4-8 4 2 3-8M14 13l4 4" stroke="#111" stroke-width="3" fill="none"/><circle cx="20" cy="10" r="2.500" fill="#111"/></svg>
<svg style="left:2905px;top:603px" width="32" height="34" viewBox="0 0 32 34"><rect x="2" y="12" width="12" height="20" rx="4" fill="#f0c050" stroke="#a06a10" stroke-width="1.500"/><path d="M12 12l16-12" stroke="#222" stroke-width="2.500"/></svg>
<svg style="left:2905px;top:637px" width="32" height="34" viewBox="0 0 32 34"><rect x="2" y="2" width="12" height="20" rx="4" fill="#f0c050" stroke="#a06a10" stroke-width="1.500"/><path d="M16 30l4-8 4 3 4-8M20 16l4 4" stroke="#111" stroke-width="3" fill="none"/><circle cx="24" cy="13" r="2.500" fill="#111"/></svg>
<div class="t" style="left:2893px;top:842.0px;font-size:27px;line-height:27px;color:#222;font-weight:bold;letter-spacing:-0.685px;">Description</div>
<div style="left:2873px;top:870px;width:926px;height:178px;background:#f4f4f4;border:1px solid #e4e4e4;border-radius:8px"></div>
<div style="left:2884px;top:902px;width:904px;height:120px;background:#fff"></div>
<div class="t" style="left:2894px;top:904.9px;font-size:23px;line-height:23px;color:#10106e;letter-spacing:0.303px;">Perform a test query on a table or procedure</div>
<div style="left:2853px;top:1394px;width:966px;height:57px;background:linear-gradient(rgba(225,236,249,1),rgba(255,255,255,0));border-radius:7px 7px 0 0"></div>
<div style="left:2853px;top:1394px;width:966px;height:57px;border-radius:7px 7px 0 0;border:2px solid #b3cff0;border-bottom:none;-webkit-mask-image:linear-gradient(#000 20%,transparent);mask-image:linear-gradient(#000 20%,transparent)"></div>
<svg style="left:2869px;top:1405px" width="10" height="18" viewBox="0 0 10 18"><path d="M1 1v16l8-8z" fill="#5a6a80"/></svg>
<div class="t" style="left:2898px;top:1408.9px;font-size:23px;line-height:23px;color:#101a6e;font-weight:bold;letter-spacing:0.355px;">Cheat Sheets</div>
<div style="left:1424px;top:1792px;width:227px;height:49px;background:linear-gradient(#dcdfe8,#f0f1f5 70%,#fdfdfd);border-radius:12px 12px 0 0;border:1px solid #d0d4de;border-bottom:none"></div>
<svg style="left:979px;top:1806px" width="31" height="30" viewBox="0 0 31 30"><rect x="16" y="2" width="12" height="26" fill="#e8e8ee" stroke="#b8b8c8"/><circle cx="10" cy="7" r="5" fill="#e86a6a"/><rect x="1" y="14" width="13" height="14" fill="#e87a7a"/><path d="M4 18l7 7M11 18l-7 7" stroke="#fff" stroke-width="1.5"/></svg>
<div class="t" style="left:1020px;top:1808.9px;font-size:23px;line-height:23px;color:#777;letter-spacing:-0.020px;">Problems</div>
<svg style="left:1139px;top:1805px" width="31" height="31" viewBox="0 0 31 31"><path d="M8 10h20v20H8z" fill="#f8f0d8" stroke="#c8b888"/><circle cx="12" cy="11" r="10" fill="#f08a8a"/><path d="M8 7l8 8M16 7l-8 8" stroke="#fff" stroke-width="2"/></svg>
<div class="t" style="left:1178px;top:1808.9px;font-size:23px;line-height:23px;color:#777;letter-spacing:0.123px;">Error Log</div>
<svg style="left:1297px;top:1807px" width="28" height="28" viewBox="0 0 28 28"><path d="M5 1v26M14 1v26M23 1v26" stroke="#888" stroke-width="2"/><rect x="1" y="15" width="8" height="6" fill="#b8d070"/><rect x="10" y="5" width="8" height="6" fill="#e8c050"/><rect x="19" y="17" width="8" height="6" fill="#8ab8e0"/></svg>
<div class="t" style="left:1335px;top:1808.9px;font-size:23px;line-height:23px;color:#777;letter-spacing:-0.179px;">Servers</div>
<svg style="left:1436px;top:1808px" width="28" height="24" viewBox="0 0 28 24"><rect x="1" y="1" width="26" height="22" fill="#f4f4f4" stroke="#5a6a8a" stroke-width="2"/><rect x="1" y="1" width="26" height="5" fill="#9aaac8"/><path d="M1 11h26M1 16h26M9 6v17" stroke="#5a6a8a" stroke-width="1.5"/></svg>
<div class="t" style="left:1473px;top:1808.9px;font-size:23px;line-height:23px;color:#000;letter-spacing:-0.388px;">SQL Results</div>
<svg style="left:1614px;top:1810px" width="21" height="21" viewBox="0 0 22 22"><path d="M4 4l14 14M18 4L4 18" stroke="#111" stroke-width="6.500" stroke-linecap="square"/><path d="M4 4l14 14M18 4L4 18" stroke="#fff" stroke-width="3" stroke-linecap="square"/></svg>
<svg style="left:1659px;top:1806px" width="31" height="31" viewBox="0 0 31 31"><path d="M2 18l12-12 8 8-12 12z" fill="#b8c8e0" stroke="#7a8aa8"/><rect x="18" y="2" width="12" height="16" fill="#fff" stroke="#999"/><path d="M21 7h6M21 11h6" stroke="#999"/></svg>
<div class="t" style="left:1699px;top:1808.9px;font-size:23px;line-height:23px;color:#777;letter-spacing:0.041px;">Teiid Execution Plan</div>
<div style="left:3405px;top:1807px;width:22px;height:22px;background:#f0dede;border:2px solid #e4e4e4"></div>
<svg style="left:3449px;top:1807px" width="24" height="24" viewBox="0 0 24 24"><path d="M3 3l18 18M21 3L3 21" stroke="#cfcfcf" stroke-width="5"/></svg>
<svg style="left:3492px;top:1803px" width="32" height="32" viewBox="0 0 32 32"><path d="M5 7l18 18M23 7L5 25" stroke="#d4d4d4" stroke-width="5"/><path d="M12 1l18 18M30 1L12 19" stroke="#dedede" stroke-width="3"/></svg>
<div style="left:3532px;top:1798px;width:2px;height:44px;background:#dcdcdc"></div>
<svg style="left:3544px;top:1803px" width="34" height="31" viewBox="0 0 34 31"><rect x="1" y="3" width="32" height="27" fill="#eef4fc" stroke="#8a7a40" stroke-width="1.500"/><rect x="1" y="3" width="14" height="6" fill="#3a7ac8"/><path d="M6 16h20M6 21h20M6 26h12" stroke="#3a6ab0" stroke-width="1.5"/></svg>
<svg style="left:3593px;top:1803px" width="24" height="31" viewBox="0 0 24 31"><path d="M1 1h15l7 7v22H1z" fill="#eef2fc" stroke="#b89850" stroke-width="1.5"/><path d="M5 12h13M5 16h13M5 20h13M5 24h13" stroke="#5a7ac0" stroke-width="1.5"/></svg>
<div style="left:3632px;top:1798px;width:2px;height:44px;background:#dcdcdc"></div>
<svg style="left:3643px;top:1803px" width="34" height="33" viewBox="0 0 34 33"><path d="M1 6h14M1 28h14M11 1v10M11 23v10" stroke="#333" stroke-width="2"/><path d="M12 13h10v-5l10 9-10 9v-5H12z" fill="#fcd880" stroke="#c88a20" stroke-width="1.5"/></svg>
<svg style="left:3706px;top:1808px" width="20" height="11" viewBox="0 0 20 11"><path d="M1 1h18L10 10z" fill="none" stroke="#111" stroke-width="2"/></svg>
<div style="left:3744px;top:1808px;width:21px;height:8px;border:2px solid #111"></div>
<div style="left:3787px;top:1807px;width:21px;height:20px;border:2px solid #111"></div>
<div style="left:3789px;top:1811px;width:17px;height:1.5px;background:#111"></div>
<div style="left:977px;top:1849px;width:404px;height:36px;background:#fff;border:1.5px solid #c4c4c4"></div>
<div class="t" style="left:985px;top:1856.9px;font-size:23px;line-height:23px;color:#000;letter-spacing:0.158px;">Type query expression here</div>
<div style="left:1389px;top:1849px;width:83px;height:36px;background:#fdfdfd;border:2px solid #a8a8a8;border-bottom:none;border-radius:0 6px 0 0"></div>
<div class="t" style="left:1396px;top:1856.9px;font-size:23px;line-height:23px;color:#000;letter-spacing:0.130px;">Status</div>
<div style="left:1472px;top:1883px;width:2358px;height:2px;background:#a0a0a0"></div>
<div style="left:976px;top:1887px;width:405px;height:2px;background:#e4e4e4"></div>
<div class="t" style="left:980px;top:1892.9px;font-size:23px;line-height:23px;color:#000;letter-spacing:0.130px;">Status</div>
<div style="left:1134px;top:1894px;width:2px;height:22px;background:#dcdcdc"></div>
<div class="t" style="left:1141px;top:1892.9px;font-size:23px;line-height:23px;color:#000;letter-spacing:0.108px;">Operation</div>
<div style="left:1294px;top:1894px;width:2px;height:22px;background:#dcdcdc"></div>
<div class="t" style="left:1300px;top:1892.9px;font-size:23px;line-height:23px;color:#000;letter-spacing:-0.148px;">Date</div>
<div style="left:976px;top:1920px;width:405px;height:2px;background:#e4e4e4"></div>
</body></html>
